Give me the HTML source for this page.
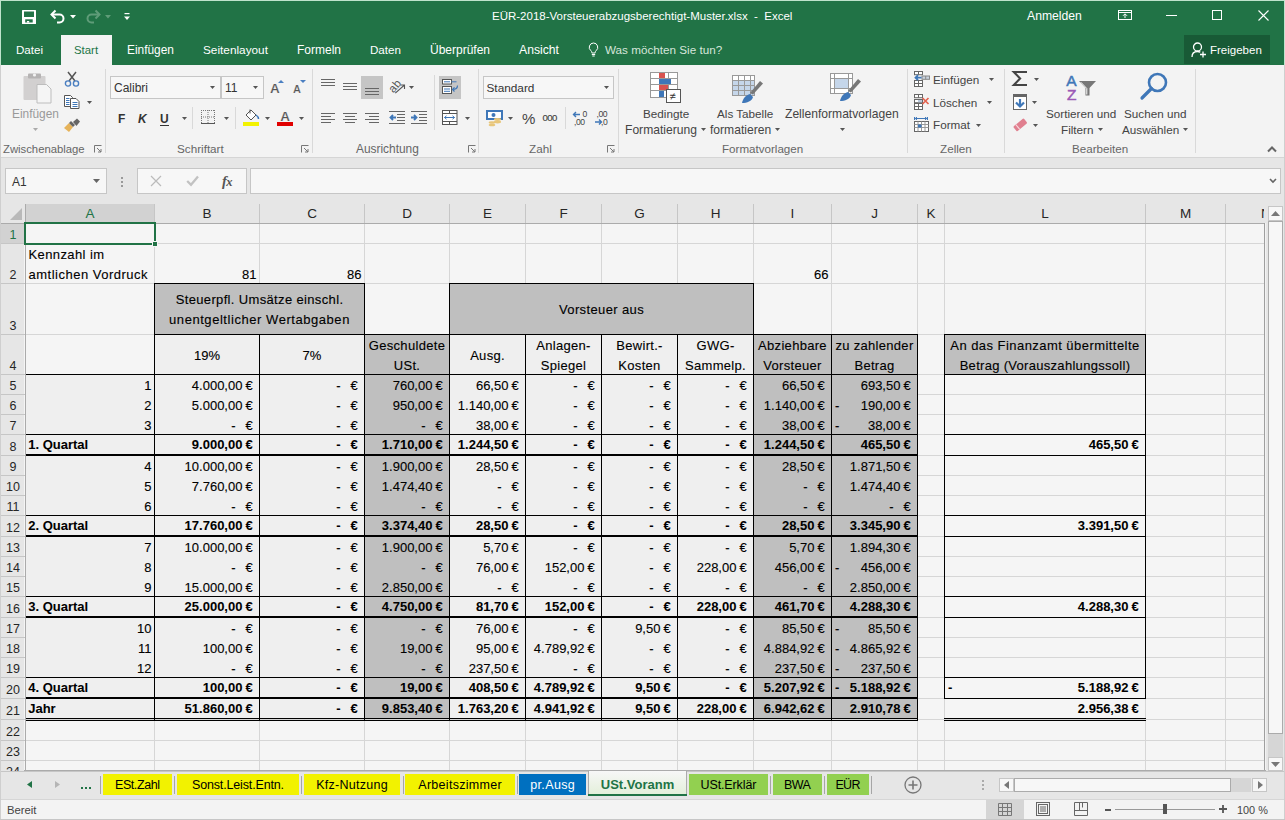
<!DOCTYPE html><html><head><meta charset="utf-8"><style>
html,body{margin:0;padding:0}
body{width:1285px;height:820px;overflow:hidden;position:relative;background:#f3f3f3;font-family:"Liberation Sans",sans-serif}
.a{position:absolute}
.t{white-space:pre}
.c{-webkit-text-stroke:0.12px currentColor}
.c[style*="font-weight:700"]{-webkit-text-stroke:0.05px currentColor}
svg{overflow:visible}
</style></head><body>

<div class="a" style="left:0px;top:0px;width:1285px;height:65px;background:#217346"></div>
<div class="a" style="left:0px;top:0px;width:1285px;height:1px;background:#bfe3cc"></div>
<div class="a" style="left:0px;top:0px;width:1px;height:65px;background:#bfe3cc"></div>
<div class="a" style="left:1284px;top:0px;width:1px;height:65px;background:#bfe3cc"></div>
<svg class="a" style="left:22px;top:10px;" width="14" height="14" viewBox="0 0 14 14"><rect x="0" y="0" width="14" height="14" rx="0.5" fill="#fff"/><rect x="2" y="1.5" width="10" height="5.5" fill="#217346"/><rect x="3.2" y="9.3" width="7.5" height="3.2" fill="#217346"/><rect x="4.9" y="11" width="2.3" height="1.6" fill="#fff"/></svg>
<svg class="a" style="left:50px;top:9px;" width="16" height="15" viewBox="0 0 16 15"><path d="M2 5.5h7.5a4 4 0 0 1 0 8H7" fill="none" stroke="#fff" stroke-width="2"/><path d="M5.5 1.5L1.5 5.5l4 4" fill="none" stroke="#fff" stroke-width="2"/></svg>
<svg class="a" style="left:70px;top:15px;" width="6" height="4" viewBox="0 0 6 4"><path d="M0 0h6L3 3.5z" fill="#fff"/></svg>
<svg class="a" style="left:85px;top:9px;" width="16" height="15" viewBox="0 0 16 15"><path d="M14 5.5H6.5a4 4 0 0 0 0 8H9" fill="none" stroke="#5f9c78" stroke-width="2"/><path d="M10.5 1.5l4 4-4 4" fill="none" stroke="#5f9c78" stroke-width="2"/></svg>
<svg class="a" style="left:105px;top:15px;" width="6" height="4" viewBox="0 0 6 4"><path d="M0 0h6L3 3.5z" fill="#5f9c78"/></svg>
<svg class="a" style="left:124px;top:13px;" width="6" height="8" viewBox="0 0 6 8"><rect x="0.5" y="0" width="5" height="1.2" fill="#fff"/><path d="M0 3.5h6L3 7z" fill="#fff"/></svg>
<div class="a t " style="left:492px;top:6.02px;font-size:11.5px;line-height:20px;color:#ffffff;width:301px;text-align:left;">EÜR-2018-Vorsteuerabzugsberechtigt-Muster.xlsx  -  Excel</div>
<div class="a t " style="left:1027px;top:5.77px;font-size:12.2px;line-height:20px;color:#ffffff;">Anmelden</div>
<svg class="a" style="left:1118px;top:10px;" width="14" height="10" viewBox="0 0 14 10"><rect x="0.5" y="0.5" width="13" height="9" fill="none" stroke="#fff" stroke-width="1"/><line x1="0.5" y1="2.5" x2="13.5" y2="2.5" stroke="#fff"/><path d="M7 8V4M5 5.8L7 3.8 9 5.8" fill="none" stroke="#fff" stroke-width="1"/></svg>
<div class="a" style="left:1166px;top:15px;width:11px;height:1px;background:#fff"></div>
<div class="a" style="left:1212px;top:10px;width:10px;height:10px;border:1px solid #fff;box-sizing:border-box"></div>
<svg class="a" style="left:1258px;top:10px;" width="11" height="11" viewBox="0 0 11 11"><path d="M0.5 0.5l10 10M10.5 0.5l-10 10" stroke="#fff" stroke-width="1.1"/></svg>
<div class="a t " style="left:16px;top:39.98px;font-size:11.6px;line-height:20px;color:#ffffff;">Datei</div>
<div class="a" style="left:61px;top:35px;width:51px;height:30px;background:#f3f3f3"></div>
<div class="a t " style="left:74px;top:40.05px;font-size:11.4px;line-height:20px;color:#217346;">Start</div>
<div class="a t " style="left:127px;top:39.88px;font-size:11.9px;line-height:20px;color:#ffffff;">Einfügen</div>
<div class="a t " style="left:203px;top:39.91px;font-size:11.8px;line-height:20px;color:#ffffff;">Seitenlayout</div>
<div class="a t " style="left:297px;top:39.84px;font-size:12px;line-height:20px;color:#ffffff;">Formeln</div>
<div class="a t " style="left:370px;top:39.98px;font-size:11.6px;line-height:20px;color:#ffffff;">Daten</div>
<div class="a t " style="left:430px;top:39.84px;font-size:12px;line-height:20px;color:#ffffff;">Überprüfen</div>
<div class="a t " style="left:519px;top:39.77px;font-size:12.2px;line-height:20px;color:#ffffff;">Ansicht</div>
<svg class="a" style="left:588px;top:41.5px;" width="11" height="15" viewBox="0 0 11 15"><path d="M5.5 1a4.3 4.3 0 0 0-2.6 7.7c.6.5.9 1.1.9 1.8V11h3.4v-.5c0-.7.3-1.3.9-1.8A4.3 4.3 0 0 0 5.5 1z" fill="none" stroke="#fff" stroke-width="1"/><path d="M3.8 12.5h3.4M4.3 14h2.4" stroke="#fff" stroke-width="1"/></svg>
<div class="a t " style="left:605px;top:40.45px;font-size:11.7px;line-height:20px;color:#d5e5da;">Was möchten Sie tun?</div>
<div class="a" style="left:1184px;top:35px;width:86px;height:29px;background:#185a36"></div>
<svg class="a" style="left:1191px;top:42px;" width="16" height="16" viewBox="0 0 16 16"><circle cx="6.5" cy="5" r="4" fill="none" stroke="#fff" stroke-width="1.3"/><path d="M1 15c0-3.3 2.2-5.5 5.5-5.5 1.2 0 2 .3 2.8.7" fill="none" stroke="#fff" stroke-width="1.3"/><path d="M12 9.5v6M9 12.5h6" stroke="#fff" stroke-width="1.3"/></svg>
<div class="a t " style="left:1210px;top:40.02px;font-size:11.5px;line-height:20px;color:#ffffff;">Freigeben</div>
<div class="a" style="left:0px;top:65px;width:1285px;height:92px;background:#f3f3f3"></div>
<div class="a" style="left:0px;top:157px;width:1285px;height:1px;background:#d5d5d5"></div>
<svg class="a" style="left:23px;top:73px;" width="29" height="31" viewBox="0 0 29 31"><rect x="0.5" y="3" width="22" height="24" rx="1" fill="#d2d0d0"/><rect x="5" y="0.5" width="13" height="5" rx="1" fill="#b5b3b3"/><circle cx="11.5" cy="2" r="1.6" fill="#f3f3f3"/><path d="M14 11.5h9.5l4.5 4.5v14H14z" fill="#f5f5f5" stroke="#bdbdbd" stroke-width="1"/></svg>
<div class="a t " style="left:12px;top:104.28px;font-size:11.9px;line-height:20px;color:#999999;">Einfügen</div>
<svg class="a" style="left:33px;top:128px;" width="5" height="3" viewBox="0 0 5 3"><path d="M0 0h5L2.5 3z" fill="#aaa"/></svg>
<svg class="a" style="left:64px;top:71px;" width="16" height="16" viewBox="0 0 16 16"><path d="M4 1l7 9M12 1L5 10" stroke="#555" stroke-width="1.5"/><circle cx="4" cy="12.5" r="2.6" fill="none" stroke="#4a7fc1" stroke-width="1.4"/><circle cx="12" cy="12.5" r="2.6" fill="none" stroke="#4a7fc1" stroke-width="1.4"/></svg>
<svg class="a" style="left:64px;top:95px;" width="16" height="14" viewBox="0 0 16 14"><path d="M0.5 0.5h6l2 2v9h-8z" fill="#fff" stroke="#555" stroke-width="1"/><path d="M6.5 3.5h5.5l3 3v7h-8.5z" fill="#fff" stroke="#555" stroke-width="1"/><path d="M2 3.5h3.5M2 5.5h3.5M2 7.5h3.5M2 9.5h3.5M8.5 7.5h5M8.5 9.5h5M8.5 11.5h5" stroke="#3f77b8" stroke-width="1"/></svg>
<svg class="a" style="left:87px;top:101px;" width="5" height="3" viewBox="0 0 5 3"><path d="M0 0h5L2.5 3z" fill="#555"/></svg>
<svg class="a" style="left:64px;top:118px;" width="17" height="14" viewBox="0 0 17 14"><path d="M9 4l4-3.5 3 3L12.5 8z" fill="#666"/><path d="M0 10l5-5 4 4-4 5z" fill="#e6b35a"/><path d="M5 5l2-2 4 4-2 2z" fill="#666"/></svg>
<div class="a t " style="left:3px;top:138.88px;font-size:11.3px;line-height:20px;color:#666666;">Zwischenablage</div>
<svg class="a" style="left:94px;top:145px;" width="8" height="8" viewBox="0 0 8 8"><path d="M0.5 7.5V0.5h7" fill="none" stroke="#777" stroke-width="1"/><path d="M3 3l4 4M7 4v3H4" fill="none" stroke="#777" stroke-width="1"/></svg>
<div class="a" style="left:105px;top:69px;width:1px;height:84px;background:#d9d9d9"></div>
<div class="a" style="left:110px;top:76px;width:111px;height:23px;background:#f7f7f7;border:1px solid #c6c6c6;box-sizing:border-box"></div>
<div class="a t " style="left:114px;top:77.84px;font-size:12px;line-height:20px;color:#333;">Calibri</div>
<svg class="a" style="left:210px;top:86px;" width="5" height="3" viewBox="0 0 5 3"><path d="M0 0h5L2.5 3z" fill="#555"/></svg>
<div class="a" style="left:221px;top:76px;width:43px;height:23px;background:#f7f7f7;border:1px solid #c6c6c6;box-sizing:border-box"></div>
<div class="a t " style="left:225px;top:77.84px;font-size:12px;line-height:20px;color:#333;">11</div>
<svg class="a" style="left:253px;top:86px;" width="5" height="3" viewBox="0 0 5 3"><path d="M0 0h5L2.5 3z" fill="#555"/></svg>
<div class="a t " style="left:270px;top:78.52px;font-size:13.5px;line-height:20px;color:#555;font-weight:700;-webkit-text-stroke:0.2px #f3f3f3;">A</div>
<svg class="a" style="left:278px;top:80px;" width="6" height="3" viewBox="0 0 6 3"><path d="M0 3h6L3 0z" fill="#4a7fc1"/></svg>
<div class="a t " style="left:293px;top:79.39px;font-size:11px;line-height:20px;color:#555;font-weight:700;-webkit-text-stroke:0.2px #f3f3f3;">A</div>
<svg class="a" style="left:300px;top:80px;" width="6" height="3" viewBox="0 0 6 3"><path d="M0 0h6L3 3z" fill="#4a7fc1"/></svg>
<div class="a t " style="left:118px;top:108.84px;font-size:12px;line-height:20px;color:#333;font-weight:700;">F</div>
<div class="a t " style="left:138px;top:108.84px;font-size:12px;line-height:20px;color:#333;font-weight:700;font-style:italic;">K</div>
<div class="a t " style="left:160px;top:108.84px;font-size:12px;line-height:20px;color:#333;font-weight:700;">U</div>
<div class="a" style="left:160px;top:125px;width:9px;height:1px;background:#333"></div>
<svg class="a" style="left:182px;top:117px;" width="5" height="3" viewBox="0 0 5 3"><path d="M0 0h5L2.5 3z" fill="#555"/></svg>
<div class="a" style="left:192px;top:107px;width:1px;height:22px;background:#d9d9d9"></div>
<svg class="a" style="left:201px;top:110px;" width="14" height="14" viewBox="0 0 14 14"><path d="M0.5 0v13M13.5 0v13M0 0.5h14M7 0v13M0 7h14" fill="none" stroke="#777" stroke-width="1" stroke-dasharray="1 1"/><path d="M0 13.5h14" stroke="#555" stroke-width="1"/></svg>
<svg class="a" style="left:224px;top:117px;" width="5" height="3" viewBox="0 0 5 3"><path d="M0 0h5L2.5 3z" fill="#555"/></svg>
<div class="a" style="left:235px;top:107px;width:1px;height:22px;background:#d9d9d9"></div>
<svg class="a" style="left:243px;top:109px;" width="17" height="13" viewBox="0 0 17 13"><path d="M3 6l5-5 5 5-5 5z" fill="#fff" stroke="#555" stroke-width="1"/><path d="M7 0.5v4" stroke="#555"/><path d="M13 6c1.5 1 2.5 2.5 2.5 4" fill="none" stroke="#3f77b8" stroke-width="1.5"/></svg>
<div class="a" style="left:243px;top:122px;width:16px;height:4px;background:#f2f200"></div>
<svg class="a" style="left:265px;top:117px;" width="5" height="3" viewBox="0 0 5 3"><path d="M0 0h5L2.5 3z" fill="#555"/></svg>
<div class="a t " style="left:277px;top:107.12px;font-size:13.5px;line-height:20px;color:#555;font-weight:700;width:16px;text-align:center;-webkit-text-stroke:0.2px #f3f3f3;">A</div>
<div class="a" style="left:277px;top:122px;width:16px;height:4px;background:#e00000"></div>
<svg class="a" style="left:299px;top:117px;" width="5" height="3" viewBox="0 0 5 3"><path d="M0 0h5L2.5 3z" fill="#555"/></svg>
<div class="a t " style="left:177px;top:138.75px;font-size:11.7px;line-height:20px;color:#666666;">Schriftart</div>
<svg class="a" style="left:301px;top:145px;" width="8" height="8" viewBox="0 0 8 8"><path d="M0.5 7.5V0.5h7" fill="none" stroke="#777" stroke-width="1"/><path d="M3 3l4 4M7 4v3H4" fill="none" stroke="#777" stroke-width="1"/></svg>
<div class="a" style="left:312px;top:69px;width:1px;height:84px;background:#d9d9d9"></div>
<svg class="a" style="left:321px;top:79px;" width="16" height="10" viewBox="0 0 16 10"><rect x="0" y="0" width="14" height="1" fill="#666"/><rect x="0" y="3" width="14" height="1" fill="#666"/><rect x="0" y="6" width="14" height="1" fill="#666"/></svg>
<svg class="a" style="left:343px;top:83px;" width="16" height="10" viewBox="0 0 16 10"><rect x="0" y="0" width="14" height="1" fill="#666"/><rect x="0" y="3" width="14" height="1" fill="#666"/><rect x="0" y="6" width="14" height="1" fill="#666"/></svg>
<div class="a" style="left:361px;top:76px;width:22px;height:23px;background:#c5c5c5"></div>
<svg class="a" style="left:365px;top:88px;" width="16" height="10" viewBox="0 0 16 10"><rect x="0" y="0" width="14" height="1" fill="#666"/><rect x="0" y="3" width="14" height="1" fill="#666"/><rect x="0" y="6" width="14" height="1" fill="#666"/></svg>
<svg class="a" style="left:388px;top:78px;" width="18" height="18" viewBox="0 0 18 18"><text x="0" y="12.5" font-size="11.5" font-family="Liberation Sans" fill="#555" transform="rotate(-50 6 8)">ab</text><path d="M7.3 15.2L16.5 7M12.5 7h4v4" fill="none" stroke="#555" stroke-width="1.1"/></svg>
<svg class="a" style="left:409px;top:86px;" width="5" height="3" viewBox="0 0 5 3"><path d="M0 0h5L2.5 3z" fill="#555"/></svg>
<svg class="a" style="left:321px;top:113px;" width="16" height="13" viewBox="0 0 16 13"><rect x="0" y="0" width="14" height="1" fill="#666"/><rect x="0" y="3" width="10" height="1" fill="#666"/><rect x="0" y="6" width="14" height="1" fill="#666"/><rect x="0" y="9" width="10" height="1" fill="#666"/></svg>
<svg class="a" style="left:343px;top:113px;" width="16" height="13" viewBox="0 0 16 13"><rect x="0" y="0" width="14" height="1" fill="#666"/><rect x="2" y="3" width="10" height="1" fill="#666"/><rect x="0" y="6" width="14" height="1" fill="#666"/><rect x="2" y="9" width="10" height="1" fill="#666"/></svg>
<svg class="a" style="left:365px;top:113px;" width="16" height="13" viewBox="0 0 16 13"><rect x="0" y="0" width="14" height="1" fill="#666"/><rect x="4" y="3" width="10" height="1" fill="#666"/><rect x="0" y="6" width="14" height="1" fill="#666"/><rect x="4" y="9" width="10" height="1" fill="#666"/></svg>
<svg class="a" style="left:389px;top:110px;" width="17" height="15" viewBox="0 0 17 15"><path d="M0 1.5h16M8 4.5h8M8 7.5h8M8 10.5h8M0 13.5h16" stroke="#666" stroke-width="1"/><path d="M7 7.5H1.5M4 5L1.5 7.5 4 10" fill="none" stroke="#3f77b8" stroke-width="1.8"/></svg>
<svg class="a" style="left:411px;top:110px;" width="17" height="15" viewBox="0 0 17 15"><path d="M0 1.5h16M8 4.5h8M8 7.5h8M8 10.5h8M0 13.5h16" stroke="#666" stroke-width="1"/><path d="M0 7.5h5.5M3 5l2.5 2.5L3 10" fill="none" stroke="#3f77b8" stroke-width="1.8"/></svg>
<div class="a" style="left:434px;top:75px;width:1px;height:55px;background:#d9d9d9"></div>
<div class="a" style="left:439px;top:76px;width:22px;height:23px;background:#c5c5c5"></div>
<svg class="a" style="left:441px;top:78px;" width="18" height="17" viewBox="0 0 18 17"><rect x="1.5" y="1.5" width="9" height="4.5" fill="#fff" stroke="#555" stroke-width="1"/><path d="M3 3.8h6M10.5 3.8h5" stroke="#3f77b8" stroke-width="1"/><rect x="1.5" y="8.5" width="9" height="7" fill="#fff" stroke="#555" stroke-width="1"/><path d="M3 11h6M3 13.3h6" stroke="#3f77b8" stroke-width="1"/><path d="M16.5 7.5c0 2.5-2 4-5 4M13.5 9.3l-2 2.2 2 2" fill="none" stroke="#3f77b8" stroke-width="1.2"/></svg>
<svg class="a" style="left:442px;top:110px;" width="16" height="15" viewBox="0 0 16 15"><rect x="0.5" y="0.5" width="14.5" height="14" fill="#fff" stroke="#555" stroke-width="1"/><path d="M0.5 3.5h14.5M0.5 11.5h14.5M7.5 0.5v3M7.5 11.5v3" stroke="#555" stroke-width="1"/><path d="M2.5 7.5h10M4.5 5.8L2.5 7.5l2 1.7M10.5 5.8l2 1.7-2 1.7" fill="none" stroke="#3f77b8" stroke-width="1"/></svg>
<svg class="a" style="left:464.5px;top:117px;" width="5" height="3" viewBox="0 0 5 3"><path d="M0 0h5L2.5 3z" fill="#555"/></svg>
<div class="a t " style="left:356px;top:138.68px;font-size:11.9px;line-height:20px;color:#666666;">Ausrichtung</div>
<svg class="a" style="left:468px;top:145px;" width="8" height="8" viewBox="0 0 8 8"><path d="M0.5 7.5V0.5h7" fill="none" stroke="#777" stroke-width="1"/><path d="M3 3l4 4M7 4v3H4" fill="none" stroke="#777" stroke-width="1"/></svg>
<div class="a" style="left:478px;top:69px;width:1px;height:84px;background:#d9d9d9"></div>
<div class="a" style="left:483px;top:76px;width:131px;height:23px;background:#f7f7f7;border:1px solid #c6c6c6;box-sizing:border-box"></div>
<div class="a t " style="left:486.5px;top:77.91px;font-size:11.8px;line-height:20px;color:#333;">Standard</div>
<svg class="a" style="left:604px;top:86px;" width="5" height="3" viewBox="0 0 5 3"><path d="M0 0h5L2.5 3z" fill="#555"/></svg>
<svg class="a" style="left:486px;top:110px;" width="17" height="17" viewBox="0 0 17 17"><rect x="1" y="1" width="15" height="8" fill="#fff" stroke="#3f77b8" stroke-width="2"/><circle cx="7.5" cy="5" r="2" fill="#3f77b8"/><ellipse cx="11.5" cy="9.5" rx="3.6" ry="1.4" fill="#e8c67a"/><ellipse cx="11.5" cy="12" rx="3.6" ry="1.4" fill="#e8c67a"/><ellipse cx="6" cy="12.5" rx="3.3" ry="1.3" fill="#e8c67a"/><ellipse cx="6" cy="15" rx="3.3" ry="1.3" fill="#e8c67a"/></svg>
<svg class="a" style="left:507.5px;top:117px;" width="5" height="3" viewBox="0 0 5 3"><path d="M0 0h5L2.5 3z" fill="#555"/></svg>
<div class="a t " style="left:522px;top:108.80px;font-size:15px;line-height:20px;color:#444;">%</div>
<div class="a t " style="left:542.5px;top:107.67px;font-size:9.6px;line-height:20px;color:#444;letter-spacing:-0.55px;-webkit-text-stroke:0.15px #444;">000</div>
<div class="a" style="left:565px;top:107px;width:1px;height:22px;background:#d9d9d9"></div>
<svg class="a" style="left:572px;top:110px;" width="17" height="16" viewBox="0 0 17 16"><path d="M8 4.5H1.5M4 2L1.5 4.5 4 7" fill="none" stroke="#3f77b8" stroke-width="1.4"/><text x="10.5" y="6.5" font-size="8.6" font-family="Liberation Sans" fill="#444">0</text><text x="2" y="14.5" font-size="8.6" font-family="Liberation Sans" fill="#444" letter-spacing="-0.4">,00</text></svg>
<svg class="a" style="left:594px;top:110px;" width="17" height="16" viewBox="0 0 17 16"><text x="2.5" y="6.5" font-size="8.6" font-family="Liberation Sans" fill="#444" letter-spacing="-0.4">,00</text><path d="M1 12h6.5M5 9.5l2.5 2.5L5 14.5" fill="none" stroke="#3f77b8" stroke-width="1.4"/><text x="7" y="14.5" font-size="8.6" font-family="Liberation Sans" fill="#444" letter-spacing="-0.4">,0</text></svg>
<div class="a t " style="left:529px;top:138.75px;font-size:11.7px;line-height:20px;color:#666666;">Zahl</div>
<svg class="a" style="left:607px;top:145px;" width="8" height="8" viewBox="0 0 8 8"><path d="M0.5 7.5V0.5h7" fill="none" stroke="#777" stroke-width="1"/><path d="M3 3l4 4M7 4v3H4" fill="none" stroke="#777" stroke-width="1"/></svg>
<div class="a" style="left:618px;top:69px;width:1px;height:84px;background:#d9d9d9"></div>
<svg class="a" style="left:650px;top:72px;" width="32" height="32" viewBox="0 0 32 32"><g stroke="#999" stroke-width="1" fill="#fff"><rect x="0.5" y="0.5" width="27" height="25"/></g><path d="M0.5 6.5h27M0.5 12.5h27M0.5 18.5h27M9.5 0.5v25M18.5 0.5v25" stroke="#999"/><rect x="9" y="1" width="6" height="5" fill="#d9534f"/><rect x="9" y="7" width="12" height="5" fill="#3f77b8"/><rect x="9" y="13" width="9" height="5" fill="#d9534f"/><rect x="9" y="19" width="5" height="6" fill="#3f77b8"/><rect x="16.5" y="17.5" width="14" height="13" fill="#fff" stroke="#555"/><text x="19.5" y="28" font-size="11" font-family="Liberation Sans" fill="#333">≠</text></svg>
<div class="a t " style="left:643px;top:103.95px;font-size:11.7px;line-height:20px;color:#444444;">Bedingte</div>
<div class="a t " style="left:625px;top:119.81px;font-size:12.1px;line-height:20px;color:#444444;">Formatierung</div>
<svg class="a" style="left:701px;top:128px;" width="5" height="3" viewBox="0 0 5 3"><path d="M0 0h5L2.5 3z" fill="#555"/></svg>
<svg class="a" style="left:732px;top:75px;" width="31" height="29" viewBox="0 0 31 29"><rect x="0.5" y="0.5" width="22" height="20" fill="#fff" stroke="#999"/><rect x="1" y="5" width="21" height="15" fill="#c5d6ea"/><path d="M0.5 5.5h22M0.5 10.5h22M0.5 15.5h22M6.5 0.5v20M12.5 0.5v20M18.5 0.5v20" stroke="#999"/><path d="M18 18l10-12 3 2.5-10 11z" fill="#777"/><path d="M10 28c1-5 4-8 8-9l3 3c-1 4-6 6-11 6z" fill="#3f77b8"/></svg>
<div class="a t " style="left:717px;top:103.95px;font-size:11.7px;line-height:20px;color:#444444;">Als Tabelle</div>
<div class="a t " style="left:710px;top:119.81px;font-size:12.1px;line-height:20px;color:#444444;">formatieren</div>
<svg class="a" style="left:775px;top:128px;" width="5" height="3" viewBox="0 0 5 3"><path d="M0 0h5L2.5 3z" fill="#555"/></svg>
<svg class="a" style="left:830px;top:73px;" width="30" height="30" viewBox="0 0 30 30"><rect x="0.5" y="0.5" width="22" height="20" fill="#fff" stroke="#999"/><path d="M0.5 5.5h22M0.5 15.5h22M4.5 0.5v20M18.5 0.5v20" stroke="#999"/><rect x="5" y="6" width="13" height="9" fill="#c5d6ea"/><path d="M18 18l10-12 3 2.5-10 11z" fill="#777"/><path d="M10 28c1-5 4-8 8-9l3 3c-1 4-6 6-11 6z" fill="#3f77b8"/></svg>
<div class="a t " style="left:785px;top:103.81px;font-size:12.1px;line-height:20px;color:#444444;">Zellenformatvorlagen</div>
<svg class="a" style="left:840px;top:128px;" width="5" height="3" viewBox="0 0 5 3"><path d="M0 0h5L2.5 3z" fill="#555"/></svg>
<div class="a t " style="left:722px;top:138.78px;font-size:11.6px;line-height:20px;color:#666666;">Formatvorlagen</div>
<div class="a" style="left:907px;top:69px;width:1px;height:84px;background:#d9d9d9"></div>
<svg class="a" style="left:914px;top:71px;" width="17" height="17" viewBox="0 0 17 17"><g fill="#fff" stroke="#666" stroke-width="1"><rect x="0.5" y="0.5" width="8" height="3.2"/><rect x="0.5" y="9.5" width="8" height="6"/></g><path d="M4.5 0.5v3.2M4.5 9.5v6M0.5 12.5h8" stroke="#666"/><rect x="8" y="5" width="7.5" height="3.3" fill="#c9d3de" stroke="#888"/><path d="M11.7 5v3.3" stroke="#888"/><path d="M7.5 6.7H1.5M4 4.2L1.5 6.7 4 9.2" fill="none" stroke="#3f77b8" stroke-width="1.8"/></svg>
<div class="a t " style="left:933px;top:70.25px;font-size:11.7px;line-height:20px;color:#444444;">Einfügen</div>
<svg class="a" style="left:989px;top:78px;" width="5" height="3" viewBox="0 0 5 3"><path d="M0 0h5L2.5 3z" fill="#555"/></svg>
<svg class="a" style="left:914px;top:94px;" width="17" height="17" viewBox="0 0 17 17"><g fill="#fff" stroke="#666" stroke-width="1"><rect x="0.5" y="0.5" width="8" height="3.2"/><rect x="0.5" y="5.5" width="8" height="3.2"/><rect x="0.5" y="9.5" width="8" height="6"/></g><rect x="4" y="6" width="4" height="2.2" fill="#b9c9dc"/><path d="M4.5 0.5v3.2M4.5 9.5v6M0.5 12.5h8" stroke="#666"/><path d="M8.5 4l6 6M14.5 4l-6 6" stroke="#e2624e" stroke-width="1.7"/></svg>
<div class="a t " style="left:933px;top:92.55px;font-size:11.7px;line-height:20px;color:#444444;">Löschen</div>
<svg class="a" style="left:987px;top:101px;" width="5" height="3" viewBox="0 0 5 3"><path d="M0 0h5L2.5 3z" fill="#555"/></svg>
<svg class="a" style="left:914px;top:117px;" width="16" height="16" viewBox="0 0 16 16"><path d="M1.5 1.5h11M0.5 0v3M13.5 0v3M3 0.2L1.2 1.5 3 2.8M11 0.2l1.8 1.3L11 2.8" fill="none" stroke="#3f77b8" stroke-width="1"/><rect x="0.5" y="4.5" width="14" height="10" fill="#fff" stroke="#666"/><path d="M0.5 7.5h14M0.5 10.5h14M4 4.5v10M7.5 4.5v10M11 4.5v10" stroke="#999"/><rect x="4" y="7.5" width="3.5" height="3" fill="#3f77b8"/></svg>
<div class="a t " style="left:933px;top:115.35px;font-size:11.7px;line-height:20px;color:#444444;">Format</div>
<svg class="a" style="left:976px;top:124px;" width="5" height="3" viewBox="0 0 5 3"><path d="M0 0h5L2.5 3z" fill="#555"/></svg>
<div class="a t " style="left:940px;top:138.75px;font-size:11.7px;line-height:20px;color:#666666;">Zellen</div>
<div class="a" style="left:1004px;top:69px;width:1px;height:84px;background:#d9d9d9"></div>
<svg class="a" style="left:1012px;top:71px;" width="16" height="16" viewBox="0 0 16 16"><path d="M15 1H1.8l6.3 6.5L1.8 14H15" fill="none" stroke="#444" stroke-width="2.1" stroke-linejoin="miter"/></svg>
<svg class="a" style="left:1034px;top:78px;" width="5" height="3" viewBox="0 0 5 3"><path d="M0 0h5L2.5 3z" fill="#555"/></svg>
<svg class="a" style="left:1013px;top:94px;" width="15" height="16" viewBox="0 0 15 16"><rect x="0.5" y="0.5" width="13" height="15" fill="#fff" stroke="#666"/><rect x="0" y="0" width="14" height="3" fill="#666"/><path d="M7 5v7" stroke="#3f77b8" stroke-width="2.2"/><path d="M3 8.5l4 4 4-4" fill="none" stroke="#3f77b8" stroke-width="2.2"/></svg>
<svg class="a" style="left:1032px;top:101px;" width="5" height="3" viewBox="0 0 5 3"><path d="M0 0h5L2.5 3z" fill="#555"/></svg>
<svg class="a" style="left:1013px;top:118px;" width="14" height="14" viewBox="0 0 14 14"><g transform="rotate(-40 7 7)"><rect x="0.5" y="4" width="13.5" height="6.2" rx="1.2" fill="#e07f8f"/><rect x="3.5" y="4" width="1.1" height="6.2" fill="#f8d9de"/></g></svg>
<svg class="a" style="left:1033px;top:124px;" width="5" height="3" viewBox="0 0 5 3"><path d="M0 0h5L2.5 3z" fill="#555"/></svg>
<svg class="a" style="left:1066px;top:73px;" width="31" height="28" viewBox="0 0 31 28"><text x="0.3" y="12.6" font-size="15.5" font-family="Liberation Sans" fill="#3f77b8" stroke="#3f77b8" stroke-width="0.5">A</text><text x="1" y="26.8" font-size="15.5" font-family="Liberation Sans" fill="#9b59b6" stroke="#9b59b6" stroke-width="0.5">Z</text><path d="M13 8h17l-6.5 7v7.5h-4V15z" fill="#777"/><path d="M14.8 9.2l6 6.3v6" fill="none" stroke="#fff" stroke-width="1"/></svg>
<div class="a t " style="left:1046px;top:103.95px;font-size:11.7px;line-height:20px;color:#444444;">Sortieren und</div>
<div class="a t " style="left:1061px;top:119.95px;font-size:11.7px;line-height:20px;color:#444444;">Filtern</div>
<svg class="a" style="left:1098px;top:128px;" width="5" height="3" viewBox="0 0 5 3"><path d="M0 0h5L2.5 3z" fill="#555"/></svg>
<svg class="a" style="left:1140px;top:72px;" width="30" height="30" viewBox="0 0 30 30"><circle cx="17.5" cy="10.5" r="8.5" fill="none" stroke="#3f77b8" stroke-width="2.6"/><path d="M11.5 16.5L2 26" stroke="#3f77b8" stroke-width="3.2" stroke-linecap="round"/></svg>
<div class="a t " style="left:1124px;top:103.95px;font-size:11.7px;line-height:20px;color:#444444;">Suchen und</div>
<div class="a t " style="left:1122px;top:119.95px;font-size:11.7px;line-height:20px;color:#444444;">Auswählen</div>
<svg class="a" style="left:1183px;top:128px;" width="5" height="3" viewBox="0 0 5 3"><path d="M0 0h5L2.5 3z" fill="#555"/></svg>
<div class="a t " style="left:1072px;top:138.78px;font-size:11.6px;line-height:20px;color:#666666;">Bearbeiten</div>
<div class="a" style="left:1195px;top:69px;width:1px;height:84px;background:#d9d9d9"></div>
<svg class="a" style="left:1267px;top:146px;" width="10" height="6" viewBox="0 0 10 6"><path d="M1 5.5L5 1.5l4 4" fill="none" stroke="#666" stroke-width="2"/></svg>
<div class="a" style="left:1px;top:158px;width:1283px;height:46px;background:#e6e6e6"></div>
<div class="a" style="left:5px;top:168px;width:102px;height:26px;background:#f7f7f7;border:1px solid #c6c6c6;box-sizing:border-box"></div>
<div class="a t " style="left:12px;top:171.84px;font-size:12px;line-height:20px;color:#333;">A1</div>
<svg class="a" style="left:93px;top:179px;" width="7" height="4" viewBox="0 0 7 4"><path d="M0 0h7L3.5 4z" fill="#666"/></svg>
<div class="a" style="left:121px;top:177px;width:2px;height:2px;background:#999"></div>
<div class="a" style="left:121px;top:181px;width:2px;height:2px;background:#999"></div>
<div class="a" style="left:121px;top:185px;width:2px;height:2px;background:#999"></div>
<div class="a" style="left:137px;top:168px;width:110px;height:26px;background:#f7f7f7;border:1px solid #c6c6c6;box-sizing:border-box"></div>
<svg class="a" style="left:150px;top:175px;" width="12" height="12" viewBox="0 0 12 12"><path d="M1 1l10 10M11 1L1 11" stroke="#bbb" stroke-width="1.2"/></svg>
<svg class="a" style="left:186px;top:175px;" width="13" height="11" viewBox="0 0 13 11"><path d="M1.2 6l3.8 3.8L12 1.5" fill="none" stroke="#c2c2c2" stroke-width="2.3"/></svg>
<div class="a t " style="left:222px;top:170.98px;font-size:14.5px;line-height:20px;color:#555;font-family:'Liberation Serif';letter-spacing:-0.5px;"><b><i>f</i></b><span style="font-size:12.5px;position:relative;top:0px"><b><i>x</i></b></span></div>
<div class="a" style="left:250px;top:168px;width:1031px;height:26px;background:#f7f7f7;border:1px solid #c6c6c6;box-sizing:border-box"></div>
<svg class="a" style="left:1269px;top:178px;" width="8" height="6" viewBox="0 0 8 6"><path d="M1 1l3 3 3-3" fill="none" stroke="#666" stroke-width="1.6"/></svg>
<div class="a" style="left:1px;top:204px;width:1263px;height:567px;background:#f5f5f5"></div>
<div class="a" style="left:26px;top:243px;width:1238px;height:1px;background:#d6d6d6"></div>
<div class="a" style="left:26px;top:283px;width:1238px;height:1px;background:#d6d6d6"></div>
<div class="a" style="left:26px;top:334px;width:1238px;height:1px;background:#d6d6d6"></div>
<div class="a" style="left:26px;top:374px;width:1238px;height:1px;background:#d6d6d6"></div>
<div class="a" style="left:26px;top:394px;width:1238px;height:1px;background:#d6d6d6"></div>
<div class="a" style="left:26px;top:414px;width:1238px;height:1px;background:#d6d6d6"></div>
<div class="a" style="left:26px;top:434px;width:1238px;height:1px;background:#d6d6d6"></div>
<div class="a" style="left:26px;top:455px;width:1238px;height:1px;background:#d6d6d6"></div>
<div class="a" style="left:26px;top:475px;width:1238px;height:1px;background:#d6d6d6"></div>
<div class="a" style="left:26px;top:495px;width:1238px;height:1px;background:#d6d6d6"></div>
<div class="a" style="left:26px;top:515px;width:1238px;height:1px;background:#d6d6d6"></div>
<div class="a" style="left:26px;top:536px;width:1238px;height:1px;background:#d6d6d6"></div>
<div class="a" style="left:26px;top:556px;width:1238px;height:1px;background:#d6d6d6"></div>
<div class="a" style="left:26px;top:576px;width:1238px;height:1px;background:#d6d6d6"></div>
<div class="a" style="left:26px;top:596px;width:1238px;height:1px;background:#d6d6d6"></div>
<div class="a" style="left:26px;top:617px;width:1238px;height:1px;background:#d6d6d6"></div>
<div class="a" style="left:26px;top:637px;width:1238px;height:1px;background:#d6d6d6"></div>
<div class="a" style="left:26px;top:657px;width:1238px;height:1px;background:#d6d6d6"></div>
<div class="a" style="left:26px;top:677px;width:1238px;height:1px;background:#d6d6d6"></div>
<div class="a" style="left:26px;top:698px;width:1238px;height:1px;background:#d6d6d6"></div>
<div class="a" style="left:26px;top:719px;width:1238px;height:1px;background:#d6d6d6"></div>
<div class="a" style="left:26px;top:740px;width:1238px;height:1px;background:#d6d6d6"></div>
<div class="a" style="left:26px;top:760px;width:1238px;height:1px;background:#d6d6d6"></div>
<div class="a" style="left:154px;top:224px;width:1px;height:547px;background:#d6d6d6"></div>
<div class="a" style="left:259px;top:224px;width:1px;height:547px;background:#d6d6d6"></div>
<div class="a" style="left:364px;top:224px;width:1px;height:547px;background:#d6d6d6"></div>
<div class="a" style="left:449px;top:224px;width:1px;height:547px;background:#d6d6d6"></div>
<div class="a" style="left:525px;top:224px;width:1px;height:547px;background:#d6d6d6"></div>
<div class="a" style="left:601px;top:224px;width:1px;height:547px;background:#d6d6d6"></div>
<div class="a" style="left:677px;top:224px;width:1px;height:547px;background:#d6d6d6"></div>
<div class="a" style="left:753px;top:224px;width:1px;height:547px;background:#d6d6d6"></div>
<div class="a" style="left:831px;top:224px;width:1px;height:547px;background:#d6d6d6"></div>
<div class="a" style="left:917px;top:224px;width:1px;height:547px;background:#d6d6d6"></div>
<div class="a" style="left:944px;top:224px;width:1px;height:547px;background:#d6d6d6"></div>
<div class="a" style="left:1145px;top:224px;width:1px;height:547px;background:#d6d6d6"></div>
<div class="a" style="left:1225px;top:224px;width:1px;height:547px;background:#d6d6d6"></div>
<div class="a" style="left:1264px;top:223px;width:1px;height:548px;background:#9f9f9f"></div>
<div class="a" style="left:1px;top:770px;width:1265px;height:1px;background:#ababab"></div>
<div class="a" style="left:1px;top:204px;width:1265px;height:19px;background:#e6e6e6"></div>
<div class="a" style="left:1px;top:204px;width:23px;height:567px;background:#e6e6e6"></div>
<div class="a" style="left:25px;top:204px;width:129px;height:19px;background:#d2d2d2"></div>
<div class="a" style="left:1px;top:224px;width:24px;height:19px;background:#d2d2d2"></div>
<div class="a" style="left:1px;top:223px;width:1263px;height:1px;background:#ababab"></div>
<div class="a" style="left:25px;top:204px;width:1px;height:567px;background:#ababab"></div>
<div class="a" style="left:154px;top:204px;width:1px;height:19px;background:#c6c6c6"></div>
<div class="a" style="left:259px;top:204px;width:1px;height:19px;background:#c6c6c6"></div>
<div class="a" style="left:364px;top:204px;width:1px;height:19px;background:#c6c6c6"></div>
<div class="a" style="left:449px;top:204px;width:1px;height:19px;background:#c6c6c6"></div>
<div class="a" style="left:525px;top:204px;width:1px;height:19px;background:#c6c6c6"></div>
<div class="a" style="left:601px;top:204px;width:1px;height:19px;background:#c6c6c6"></div>
<div class="a" style="left:677px;top:204px;width:1px;height:19px;background:#c6c6c6"></div>
<div class="a" style="left:753px;top:204px;width:1px;height:19px;background:#c6c6c6"></div>
<div class="a" style="left:831px;top:204px;width:1px;height:19px;background:#c6c6c6"></div>
<div class="a" style="left:917px;top:204px;width:1px;height:19px;background:#c6c6c6"></div>
<div class="a" style="left:944px;top:204px;width:1px;height:19px;background:#c6c6c6"></div>
<div class="a" style="left:1145px;top:204px;width:1px;height:19px;background:#c6c6c6"></div>
<div class="a" style="left:1225px;top:204px;width:1px;height:19px;background:#c6c6c6"></div>
<div class="a" style="left:1px;top:243px;width:24px;height:1px;background:#c6c6c6"></div>
<div class="a" style="left:1px;top:283px;width:24px;height:1px;background:#c6c6c6"></div>
<div class="a" style="left:1px;top:334px;width:24px;height:1px;background:#c6c6c6"></div>
<div class="a" style="left:1px;top:374px;width:24px;height:1px;background:#c6c6c6"></div>
<div class="a" style="left:1px;top:394px;width:24px;height:1px;background:#c6c6c6"></div>
<div class="a" style="left:1px;top:414px;width:24px;height:1px;background:#c6c6c6"></div>
<div class="a" style="left:1px;top:434px;width:24px;height:1px;background:#c6c6c6"></div>
<div class="a" style="left:1px;top:455px;width:24px;height:1px;background:#c6c6c6"></div>
<div class="a" style="left:1px;top:475px;width:24px;height:1px;background:#c6c6c6"></div>
<div class="a" style="left:1px;top:495px;width:24px;height:1px;background:#c6c6c6"></div>
<div class="a" style="left:1px;top:515px;width:24px;height:1px;background:#c6c6c6"></div>
<div class="a" style="left:1px;top:536px;width:24px;height:1px;background:#c6c6c6"></div>
<div class="a" style="left:1px;top:556px;width:24px;height:1px;background:#c6c6c6"></div>
<div class="a" style="left:1px;top:576px;width:24px;height:1px;background:#c6c6c6"></div>
<div class="a" style="left:1px;top:596px;width:24px;height:1px;background:#c6c6c6"></div>
<div class="a" style="left:1px;top:617px;width:24px;height:1px;background:#c6c6c6"></div>
<div class="a" style="left:1px;top:637px;width:24px;height:1px;background:#c6c6c6"></div>
<div class="a" style="left:1px;top:657px;width:24px;height:1px;background:#c6c6c6"></div>
<div class="a" style="left:1px;top:677px;width:24px;height:1px;background:#c6c6c6"></div>
<div class="a" style="left:1px;top:698px;width:24px;height:1px;background:#c6c6c6"></div>
<div class="a" style="left:1px;top:719px;width:24px;height:1px;background:#c6c6c6"></div>
<div class="a" style="left:1px;top:740px;width:24px;height:1px;background:#c6c6c6"></div>
<div class="a" style="left:1px;top:760px;width:24px;height:1px;background:#c6c6c6"></div>
<svg class="a" style="left:10px;top:208px;" width="12" height="12" viewBox="0 0 12 12"><path d="M12 0V12H0z" fill="#b9b9b9"/></svg>
<div class="a t " style="left:26px;top:203.82px;font-size:13.5px;line-height:20px;color:#217346;width:128px;text-align:center;">A</div>
<div class="a t " style="left:155px;top:203.82px;font-size:13.5px;line-height:20px;color:#262626;width:104px;text-align:center;">B</div>
<div class="a t " style="left:260px;top:203.82px;font-size:13.5px;line-height:20px;color:#262626;width:104px;text-align:center;">C</div>
<div class="a t " style="left:365px;top:203.82px;font-size:13.5px;line-height:20px;color:#262626;width:84px;text-align:center;">D</div>
<div class="a t " style="left:450px;top:203.82px;font-size:13.5px;line-height:20px;color:#262626;width:75px;text-align:center;">E</div>
<div class="a t " style="left:526px;top:203.82px;font-size:13.5px;line-height:20px;color:#262626;width:75px;text-align:center;">F</div>
<div class="a t " style="left:602px;top:203.82px;font-size:13.5px;line-height:20px;color:#262626;width:75px;text-align:center;">G</div>
<div class="a t " style="left:678px;top:203.82px;font-size:13.5px;line-height:20px;color:#262626;width:75px;text-align:center;">H</div>
<div class="a t " style="left:754px;top:203.82px;font-size:13.5px;line-height:20px;color:#262626;width:77px;text-align:center;">I</div>
<div class="a t " style="left:832px;top:203.82px;font-size:13.5px;line-height:20px;color:#262626;width:85px;text-align:center;">J</div>
<div class="a t " style="left:918px;top:203.82px;font-size:13.5px;line-height:20px;color:#262626;width:26px;text-align:center;">K</div>
<div class="a t " style="left:945px;top:203.82px;font-size:13.5px;line-height:20px;color:#262626;width:200px;text-align:center;">L</div>
<div class="a t " style="left:1146px;top:203.82px;font-size:13.5px;line-height:20px;color:#262626;width:79px;text-align:center;">M</div>
<div class="a t " style="left:1261px;top:203.82px;font-size:13.5px;line-height:20px;color:#262626;width:3px;overflow:hidden;">N</div>
<div class="a t " style="left:1px;top:224.97px;font-size:12.5px;line-height:20px;color:#217346;width:24px;text-align:center;">1</div>
<div class="a t " style="left:1px;top:264.97px;font-size:12.5px;line-height:20px;color:#262626;width:24px;text-align:center;">2</div>
<div class="a t " style="left:1px;top:315.97px;font-size:12.5px;line-height:20px;color:#262626;width:24px;text-align:center;">3</div>
<div class="a t " style="left:1px;top:355.97px;font-size:12.5px;line-height:20px;color:#262626;width:24px;text-align:center;">4</div>
<div class="a t " style="left:1px;top:375.97px;font-size:12.5px;line-height:20px;color:#262626;width:24px;text-align:center;">5</div>
<div class="a t " style="left:1px;top:395.97px;font-size:12.5px;line-height:20px;color:#262626;width:24px;text-align:center;">6</div>
<div class="a t " style="left:1px;top:415.97px;font-size:12.5px;line-height:20px;color:#262626;width:24px;text-align:center;">7</div>
<div class="a t " style="left:1px;top:436.97px;font-size:12.5px;line-height:20px;color:#262626;width:24px;text-align:center;">8</div>
<div class="a t " style="left:1px;top:456.97px;font-size:12.5px;line-height:20px;color:#262626;width:24px;text-align:center;">9</div>
<div class="a t " style="left:1px;top:476.97px;font-size:12.5px;line-height:20px;color:#262626;width:24px;text-align:center;">10</div>
<div class="a t " style="left:1px;top:496.97px;font-size:12.5px;line-height:20px;color:#262626;width:24px;text-align:center;">11</div>
<div class="a t " style="left:1px;top:517.97px;font-size:12.5px;line-height:20px;color:#262626;width:24px;text-align:center;">12</div>
<div class="a t " style="left:1px;top:537.97px;font-size:12.5px;line-height:20px;color:#262626;width:24px;text-align:center;">13</div>
<div class="a t " style="left:1px;top:557.97px;font-size:12.5px;line-height:20px;color:#262626;width:24px;text-align:center;">14</div>
<div class="a t " style="left:1px;top:577.97px;font-size:12.5px;line-height:20px;color:#262626;width:24px;text-align:center;">15</div>
<div class="a t " style="left:1px;top:598.97px;font-size:12.5px;line-height:20px;color:#262626;width:24px;text-align:center;">16</div>
<div class="a t " style="left:1px;top:618.97px;font-size:12.5px;line-height:20px;color:#262626;width:24px;text-align:center;">17</div>
<div class="a t " style="left:1px;top:638.97px;font-size:12.5px;line-height:20px;color:#262626;width:24px;text-align:center;">18</div>
<div class="a t " style="left:1px;top:658.97px;font-size:12.5px;line-height:20px;color:#262626;width:24px;text-align:center;">19</div>
<div class="a t " style="left:1px;top:679.97px;font-size:12.5px;line-height:20px;color:#262626;width:24px;text-align:center;">20</div>
<div class="a t " style="left:1px;top:700.97px;font-size:12.5px;line-height:20px;color:#262626;width:24px;text-align:center;">21</div>
<div class="a t " style="left:1px;top:721.97px;font-size:12.5px;line-height:20px;color:#262626;width:24px;text-align:center;">22</div>
<div class="a t " style="left:1px;top:741.97px;font-size:12.5px;line-height:20px;color:#262626;width:24px;text-align:center;">23</div>
<div class="a" style="left:1px;top:761px;width:24px;height:10px;overflow:hidden">
<div class="a t " style="left:0px;top:0.67px;font-size:12.5px;line-height:20px;color:#262626;width:24px;text-align:center;">24</div>
</div>
<div class="a" style="left:26px;top:375px;width:891px;height:344px;background:#efefef"></div>
<div class="a" style="left:155px;top:335px;width:209px;height:39px;background:#efefef"></div>
<div class="a" style="left:450px;top:335px;width:303px;height:39px;background:#efefef"></div>
<div class="a" style="left:155px;top:284px;width:209px;height:50px;background:#bfbfbf"></div>
<div class="a" style="left:450px;top:284px;width:303px;height:50px;background:#bfbfbf"></div>
<div class="a" style="left:365px;top:335px;width:84px;height:384px;background:#bfbfbf"></div>
<div class="a" style="left:754px;top:335px;width:163px;height:384px;background:#bfbfbf"></div>
<div class="a" style="left:945px;top:335px;width:200px;height:39px;background:#bfbfbf"></div>
<div class="a" style="left:154px;top:283px;width:211px;height:1px;background:#000"></div>
<div class="a" style="left:449px;top:283px;width:305px;height:1px;background:#000"></div>
<div class="a" style="left:154px;top:283px;width:1px;height:52px;background:#000"></div>
<div class="a" style="left:364px;top:283px;width:1px;height:52px;background:#000"></div>
<div class="a" style="left:449px;top:283px;width:1px;height:52px;background:#000"></div>
<div class="a" style="left:753px;top:283px;width:1px;height:52px;background:#000"></div>
<div class="a" style="left:154px;top:334px;width:764px;height:1px;background:#000"></div>
<div class="a" style="left:917px;top:334px;width:1px;height:1px;background:#000"></div>
<div class="a" style="left:26px;top:374px;width:892px;height:1px;background:#000"></div>
<div class="a" style="left:26px;top:434px;width:892px;height:1px;background:#000"></div>
<div class="a" style="left:26px;top:515px;width:892px;height:1px;background:#000"></div>
<div class="a" style="left:26px;top:596px;width:892px;height:1px;background:#000"></div>
<div class="a" style="left:26px;top:677px;width:892px;height:1px;background:#000"></div>
<div class="a" style="left:26px;top:454px;width:892px;height:2px;background:#000"></div>
<div class="a" style="left:26px;top:535px;width:892px;height:2px;background:#000"></div>
<div class="a" style="left:26px;top:616px;width:892px;height:2px;background:#000"></div>
<div class="a" style="left:26px;top:697px;width:892px;height:2px;background:#000"></div>
<div class="a" style="left:26px;top:718px;width:892px;height:1px;background:#000"></div>
<div class="a" style="left:26px;top:720px;width:892px;height:1px;background:#000"></div>
<div class="a" style="left:154px;top:334px;width:1px;height:387px;background:#000"></div>
<div class="a" style="left:259px;top:334px;width:1px;height:387px;background:#000"></div>
<div class="a" style="left:364px;top:334px;width:1px;height:387px;background:#000"></div>
<div class="a" style="left:449px;top:334px;width:1px;height:387px;background:#000"></div>
<div class="a" style="left:525px;top:334px;width:1px;height:387px;background:#000"></div>
<div class="a" style="left:601px;top:334px;width:1px;height:387px;background:#000"></div>
<div class="a" style="left:677px;top:334px;width:1px;height:387px;background:#000"></div>
<div class="a" style="left:753px;top:334px;width:1px;height:387px;background:#000"></div>
<div class="a" style="left:831px;top:334px;width:1px;height:387px;background:#000"></div>
<div class="a" style="left:917px;top:334px;width:1px;height:387px;background:#000"></div>
<div class="a" style="left:944px;top:334px;width:202px;height:1px;background:#000"></div>
<div class="a" style="left:944px;top:374px;width:202px;height:1px;background:#000"></div>
<div class="a" style="left:944px;top:334px;width:1px;height:365px;background:#000"></div>
<div class="a" style="left:1145px;top:334px;width:1px;height:365px;background:#000"></div>
<div class="a" style="left:944px;top:434px;width:202px;height:1px;background:#000"></div>
<div class="a" style="left:944px;top:455px;width:202px;height:1px;background:#000"></div>
<div class="a" style="left:944px;top:515px;width:202px;height:1px;background:#000"></div>
<div class="a" style="left:944px;top:536px;width:202px;height:1px;background:#000"></div>
<div class="a" style="left:944px;top:596px;width:202px;height:1px;background:#000"></div>
<div class="a" style="left:944px;top:617px;width:202px;height:1px;background:#000"></div>
<div class="a" style="left:944px;top:677px;width:202px;height:1px;background:#000"></div>
<div class="a" style="left:944px;top:698px;width:202px;height:1px;background:#000"></div>
<div class="a" style="left:944px;top:718px;width:202px;height:1px;background:#000"></div>
<div class="a" style="left:944px;top:720px;width:202px;height:1px;background:#000"></div>
<div class="a" style="left:24px;top:222px;width:132px;height:23px;border:2px solid #217346;box-sizing:border-box"></div>
<div class="a" style="left:152px;top:241px;width:6px;height:6px;background:#217346;border:1px solid #f5f5f5;box-sizing:border-box"></div>
<div class="a t c" style="left:28.5px;top:245.00px;font-size:13px;line-height:20px;color:#000;letter-spacing:0.4px;">Kennzahl im</div>
<div class="a t c" style="left:28.5px;top:265.00px;font-size:13px;line-height:20px;color:#000;letter-spacing:0.5px;">amtlichen Vordruck</div>
<div class="a t c" style="left:155px;top:264.70px;font-size:13px;line-height:20px;color:#000;width:101.5px;text-align:right;">81</div>
<div class="a t c" style="left:260px;top:264.70px;font-size:13px;line-height:20px;color:#000;width:101.5px;text-align:right;">86</div>
<div class="a t c" style="left:754px;top:264.70px;font-size:13px;line-height:20px;color:#000;width:74.5px;text-align:right;">66</div>
<div class="a t c" style="left:155px;top:289.50px;font-size:13px;line-height:20px;color:#000;letter-spacing:0.35px;width:209px;text-align:center;">Steuerpfl. Umsätze einschl.</div>
<div class="a t c" style="left:155px;top:309.50px;font-size:13px;line-height:20px;color:#000;letter-spacing:0.55px;width:209px;text-align:center;">unentgeltlicher Wertabgaben</div>
<div class="a t c" style="left:450px;top:299.50px;font-size:13px;line-height:20px;color:#000;letter-spacing:0.37px;width:303px;text-align:center;">Vorsteuer aus</div>
<div class="a t c" style="left:155px;top:345.50px;font-size:13px;line-height:20px;color:#000;width:104px;text-align:center;">19%</div>
<div class="a t c" style="left:260px;top:345.50px;font-size:13px;line-height:20px;color:#000;width:104px;text-align:center;">7%</div>
<div class="a t c" style="left:365px;top:335.50px;font-size:13px;line-height:20px;color:#000;letter-spacing:0.33px;width:84px;text-align:center;">Geschuldete</div>
<div class="a t c" style="left:365px;top:355.50px;font-size:13px;line-height:20px;color:#000;letter-spacing:0.3px;width:84px;text-align:center;">USt.</div>
<div class="a t c" style="left:450px;top:345.50px;font-size:13px;line-height:20px;color:#000;letter-spacing:0.3px;width:75px;text-align:center;">Ausg.</div>
<div class="a t c" style="left:526px;top:335.50px;font-size:13px;line-height:20px;color:#000;letter-spacing:0.3px;width:75px;text-align:center;">Anlagen-</div>
<div class="a t c" style="left:526px;top:355.50px;font-size:13px;line-height:20px;color:#000;letter-spacing:0.3px;width:75px;text-align:center;">Spiegel</div>
<div class="a t c" style="left:602px;top:335.50px;font-size:13px;line-height:20px;color:#000;letter-spacing:0.3px;width:75px;text-align:center;">Bewirt.-</div>
<div class="a t c" style="left:602px;top:355.50px;font-size:13px;line-height:20px;color:#000;letter-spacing:0.3px;width:75px;text-align:center;">Kosten</div>
<div class="a t c" style="left:678px;top:335.50px;font-size:13px;line-height:20px;color:#000;letter-spacing:0.3px;width:75px;text-align:center;">GWG-</div>
<div class="a t c" style="left:678px;top:355.50px;font-size:13px;line-height:20px;color:#000;letter-spacing:0.3px;width:75px;text-align:center;">Sammelp.</div>
<div class="a t c" style="left:754px;top:335.50px;font-size:13px;line-height:20px;color:#000;letter-spacing:0.3px;width:77px;text-align:center;">Abziehbare</div>
<div class="a t c" style="left:754px;top:355.50px;font-size:13px;line-height:20px;color:#000;letter-spacing:0.3px;width:77px;text-align:center;">Vorsteuer</div>
<div class="a t c" style="left:832px;top:335.50px;font-size:13px;line-height:20px;color:#000;letter-spacing:0.3px;width:85px;text-align:center;">zu zahlender</div>
<div class="a t c" style="left:832px;top:355.50px;font-size:13px;line-height:20px;color:#000;letter-spacing:0.3px;width:85px;text-align:center;">Betrag</div>
<div class="a t c" style="left:945px;top:335.50px;font-size:13px;line-height:20px;color:#000;letter-spacing:0.45px;width:200px;text-align:center;">An das Finanzamt übermittelte</div>
<div class="a t c" style="left:945px;top:355.50px;font-size:13px;line-height:20px;color:#000;letter-spacing:0.3px;width:200px;text-align:center;">Betrag (Vorauszahlungssoll)</div>
<div class="a t c" style="left:26px;top:375.70px;font-size:13px;line-height:20px;color:#000;width:125.5px;text-align:right;">1</div>
<div class="a t c" style="left:155px;top:375.70px;font-size:13px;line-height:20px;color:#000;width:97.7px;text-align:right;word-spacing:-0.6px;">4.000,00 €</div>
<div class="a t c" style="left:260px;top:375.70px;font-size:13px;line-height:20px;color:#000;width:80.5px;text-align:right;">-</div>
<div class="a t c" style="left:260px;top:375.70px;font-size:13px;line-height:20px;color:#000;width:97.7px;text-align:right;">€</div>
<div class="a t c" style="left:365px;top:375.70px;font-size:13px;line-height:20px;color:#000;width:77.7px;text-align:right;word-spacing:-0.6px;">760,00 €</div>
<div class="a t c" style="left:450px;top:375.70px;font-size:13px;line-height:20px;color:#000;width:68.7px;text-align:right;word-spacing:-0.6px;">66,50 €</div>
<div class="a t c" style="left:526px;top:375.70px;font-size:13px;line-height:20px;color:#000;width:51.5px;text-align:right;">-</div>
<div class="a t c" style="left:526px;top:375.70px;font-size:13px;line-height:20px;color:#000;width:68.7px;text-align:right;">€</div>
<div class="a t c" style="left:602px;top:375.70px;font-size:13px;line-height:20px;color:#000;width:51.5px;text-align:right;">-</div>
<div class="a t c" style="left:602px;top:375.70px;font-size:13px;line-height:20px;color:#000;width:68.7px;text-align:right;">€</div>
<div class="a t c" style="left:678px;top:375.70px;font-size:13px;line-height:20px;color:#000;width:51.5px;text-align:right;">-</div>
<div class="a t c" style="left:678px;top:375.70px;font-size:13px;line-height:20px;color:#000;width:68.7px;text-align:right;">€</div>
<div class="a t c" style="left:754px;top:375.70px;font-size:13px;line-height:20px;color:#000;width:70.7px;text-align:right;word-spacing:-0.6px;">66,50 €</div>
<div class="a t c" style="left:832px;top:375.70px;font-size:13px;line-height:20px;color:#000;width:78.7px;text-align:right;word-spacing:-0.6px;">693,50 €</div>
<div class="a t c" style="left:26px;top:395.70px;font-size:13px;line-height:20px;color:#000;width:125.5px;text-align:right;">2</div>
<div class="a t c" style="left:155px;top:395.70px;font-size:13px;line-height:20px;color:#000;width:97.7px;text-align:right;word-spacing:-0.6px;">5.000,00 €</div>
<div class="a t c" style="left:260px;top:395.70px;font-size:13px;line-height:20px;color:#000;width:80.5px;text-align:right;">-</div>
<div class="a t c" style="left:260px;top:395.70px;font-size:13px;line-height:20px;color:#000;width:97.7px;text-align:right;">€</div>
<div class="a t c" style="left:365px;top:395.70px;font-size:13px;line-height:20px;color:#000;width:77.7px;text-align:right;word-spacing:-0.6px;">950,00 €</div>
<div class="a t c" style="left:450px;top:395.70px;font-size:13px;line-height:20px;color:#000;width:68.7px;text-align:right;word-spacing:-0.6px;">1.140,00 €</div>
<div class="a t c" style="left:526px;top:395.70px;font-size:13px;line-height:20px;color:#000;width:51.5px;text-align:right;">-</div>
<div class="a t c" style="left:526px;top:395.70px;font-size:13px;line-height:20px;color:#000;width:68.7px;text-align:right;">€</div>
<div class="a t c" style="left:602px;top:395.70px;font-size:13px;line-height:20px;color:#000;width:51.5px;text-align:right;">-</div>
<div class="a t c" style="left:602px;top:395.70px;font-size:13px;line-height:20px;color:#000;width:68.7px;text-align:right;">€</div>
<div class="a t c" style="left:678px;top:395.70px;font-size:13px;line-height:20px;color:#000;width:51.5px;text-align:right;">-</div>
<div class="a t c" style="left:678px;top:395.70px;font-size:13px;line-height:20px;color:#000;width:68.7px;text-align:right;">€</div>
<div class="a t c" style="left:754px;top:395.70px;font-size:13px;line-height:20px;color:#000;width:70.7px;text-align:right;word-spacing:-0.6px;">1.140,00 €</div>
<div class="a t c" style="left:832px;top:395.70px;font-size:13px;line-height:20px;color:#000;width:78.7px;text-align:right;word-spacing:-0.6px;">190,00 €</div>
<div class="a t c" style="left:835px;top:395.70px;font-size:13px;line-height:20px;color:#000;">-</div>
<div class="a t c" style="left:26px;top:415.70px;font-size:13px;line-height:20px;color:#000;width:125.5px;text-align:right;">3</div>
<div class="a t c" style="left:155px;top:415.70px;font-size:13px;line-height:20px;color:#000;width:80.5px;text-align:right;">-</div>
<div class="a t c" style="left:155px;top:415.70px;font-size:13px;line-height:20px;color:#000;width:97.7px;text-align:right;">€</div>
<div class="a t c" style="left:260px;top:415.70px;font-size:13px;line-height:20px;color:#000;width:80.5px;text-align:right;">-</div>
<div class="a t c" style="left:260px;top:415.70px;font-size:13px;line-height:20px;color:#000;width:97.7px;text-align:right;">€</div>
<div class="a t c" style="left:365px;top:415.70px;font-size:13px;line-height:20px;color:#000;width:60.5px;text-align:right;">-</div>
<div class="a t c" style="left:365px;top:415.70px;font-size:13px;line-height:20px;color:#000;width:77.7px;text-align:right;">€</div>
<div class="a t c" style="left:450px;top:415.70px;font-size:13px;line-height:20px;color:#000;width:68.7px;text-align:right;word-spacing:-0.6px;">38,00 €</div>
<div class="a t c" style="left:526px;top:415.70px;font-size:13px;line-height:20px;color:#000;width:51.5px;text-align:right;">-</div>
<div class="a t c" style="left:526px;top:415.70px;font-size:13px;line-height:20px;color:#000;width:68.7px;text-align:right;">€</div>
<div class="a t c" style="left:602px;top:415.70px;font-size:13px;line-height:20px;color:#000;width:51.5px;text-align:right;">-</div>
<div class="a t c" style="left:602px;top:415.70px;font-size:13px;line-height:20px;color:#000;width:68.7px;text-align:right;">€</div>
<div class="a t c" style="left:678px;top:415.70px;font-size:13px;line-height:20px;color:#000;width:51.5px;text-align:right;">-</div>
<div class="a t c" style="left:678px;top:415.70px;font-size:13px;line-height:20px;color:#000;width:68.7px;text-align:right;">€</div>
<div class="a t c" style="left:754px;top:415.70px;font-size:13px;line-height:20px;color:#000;width:70.7px;text-align:right;word-spacing:-0.6px;">38,00 €</div>
<div class="a t c" style="left:832px;top:415.70px;font-size:13px;line-height:20px;color:#000;width:78.7px;text-align:right;word-spacing:-0.6px;">38,00 €</div>
<div class="a t c" style="left:835px;top:415.70px;font-size:13px;line-height:20px;color:#000;">-</div>
<div class="a t c" style="left:28.2px;top:434.90px;font-size:13px;line-height:20px;color:#000;font-weight:700;">1. Quartal</div>
<div class="a t c" style="left:155px;top:434.90px;font-size:13px;line-height:20px;color:#000;font-weight:700;width:97.7px;text-align:right;word-spacing:-0.6px;">9.000,00 €</div>
<div class="a t c" style="left:260px;top:434.90px;font-size:13px;line-height:20px;color:#000;font-weight:700;width:80.5px;text-align:right;">-</div>
<div class="a t c" style="left:260px;top:434.90px;font-size:13px;line-height:20px;color:#000;font-weight:700;width:97.7px;text-align:right;">€</div>
<div class="a t c" style="left:365px;top:434.90px;font-size:13px;line-height:20px;color:#000;font-weight:700;width:77.7px;text-align:right;word-spacing:-0.6px;">1.710,00 €</div>
<div class="a t c" style="left:450px;top:434.90px;font-size:13px;line-height:20px;color:#000;font-weight:700;width:68.7px;text-align:right;word-spacing:-0.6px;">1.244,50 €</div>
<div class="a t c" style="left:526px;top:434.90px;font-size:13px;line-height:20px;color:#000;font-weight:700;width:51.5px;text-align:right;">-</div>
<div class="a t c" style="left:526px;top:434.90px;font-size:13px;line-height:20px;color:#000;font-weight:700;width:68.7px;text-align:right;">€</div>
<div class="a t c" style="left:602px;top:434.90px;font-size:13px;line-height:20px;color:#000;font-weight:700;width:51.5px;text-align:right;">-</div>
<div class="a t c" style="left:602px;top:434.90px;font-size:13px;line-height:20px;color:#000;font-weight:700;width:68.7px;text-align:right;">€</div>
<div class="a t c" style="left:678px;top:434.90px;font-size:13px;line-height:20px;color:#000;font-weight:700;width:51.5px;text-align:right;">-</div>
<div class="a t c" style="left:678px;top:434.90px;font-size:13px;line-height:20px;color:#000;font-weight:700;width:68.7px;text-align:right;">€</div>
<div class="a t c" style="left:754px;top:434.90px;font-size:13px;line-height:20px;color:#000;font-weight:700;width:70.7px;text-align:right;word-spacing:-0.6px;">1.244,50 €</div>
<div class="a t c" style="left:832px;top:434.90px;font-size:13px;line-height:20px;color:#000;font-weight:700;width:78.7px;text-align:right;word-spacing:-0.6px;">465,50 €</div>
<div class="a t c" style="left:26px;top:456.70px;font-size:13px;line-height:20px;color:#000;width:125.5px;text-align:right;">4</div>
<div class="a t c" style="left:155px;top:456.70px;font-size:13px;line-height:20px;color:#000;width:97.7px;text-align:right;word-spacing:-0.6px;">10.000,00 €</div>
<div class="a t c" style="left:260px;top:456.70px;font-size:13px;line-height:20px;color:#000;width:80.5px;text-align:right;">-</div>
<div class="a t c" style="left:260px;top:456.70px;font-size:13px;line-height:20px;color:#000;width:97.7px;text-align:right;">€</div>
<div class="a t c" style="left:365px;top:456.70px;font-size:13px;line-height:20px;color:#000;width:77.7px;text-align:right;word-spacing:-0.6px;">1.900,00 €</div>
<div class="a t c" style="left:450px;top:456.70px;font-size:13px;line-height:20px;color:#000;width:68.7px;text-align:right;word-spacing:-0.6px;">28,50 €</div>
<div class="a t c" style="left:526px;top:456.70px;font-size:13px;line-height:20px;color:#000;width:51.5px;text-align:right;">-</div>
<div class="a t c" style="left:526px;top:456.70px;font-size:13px;line-height:20px;color:#000;width:68.7px;text-align:right;">€</div>
<div class="a t c" style="left:602px;top:456.70px;font-size:13px;line-height:20px;color:#000;width:51.5px;text-align:right;">-</div>
<div class="a t c" style="left:602px;top:456.70px;font-size:13px;line-height:20px;color:#000;width:68.7px;text-align:right;">€</div>
<div class="a t c" style="left:678px;top:456.70px;font-size:13px;line-height:20px;color:#000;width:51.5px;text-align:right;">-</div>
<div class="a t c" style="left:678px;top:456.70px;font-size:13px;line-height:20px;color:#000;width:68.7px;text-align:right;">€</div>
<div class="a t c" style="left:754px;top:456.70px;font-size:13px;line-height:20px;color:#000;width:70.7px;text-align:right;word-spacing:-0.6px;">28,50 €</div>
<div class="a t c" style="left:832px;top:456.70px;font-size:13px;line-height:20px;color:#000;width:78.7px;text-align:right;word-spacing:-0.6px;">1.871,50 €</div>
<div class="a t c" style="left:26px;top:476.70px;font-size:13px;line-height:20px;color:#000;width:125.5px;text-align:right;">5</div>
<div class="a t c" style="left:155px;top:476.70px;font-size:13px;line-height:20px;color:#000;width:97.7px;text-align:right;word-spacing:-0.6px;">7.760,00 €</div>
<div class="a t c" style="left:260px;top:476.70px;font-size:13px;line-height:20px;color:#000;width:80.5px;text-align:right;">-</div>
<div class="a t c" style="left:260px;top:476.70px;font-size:13px;line-height:20px;color:#000;width:97.7px;text-align:right;">€</div>
<div class="a t c" style="left:365px;top:476.70px;font-size:13px;line-height:20px;color:#000;width:77.7px;text-align:right;word-spacing:-0.6px;">1.474,40 €</div>
<div class="a t c" style="left:450px;top:476.70px;font-size:13px;line-height:20px;color:#000;width:51.5px;text-align:right;">-</div>
<div class="a t c" style="left:450px;top:476.70px;font-size:13px;line-height:20px;color:#000;width:68.7px;text-align:right;">€</div>
<div class="a t c" style="left:526px;top:476.70px;font-size:13px;line-height:20px;color:#000;width:51.5px;text-align:right;">-</div>
<div class="a t c" style="left:526px;top:476.70px;font-size:13px;line-height:20px;color:#000;width:68.7px;text-align:right;">€</div>
<div class="a t c" style="left:602px;top:476.70px;font-size:13px;line-height:20px;color:#000;width:51.5px;text-align:right;">-</div>
<div class="a t c" style="left:602px;top:476.70px;font-size:13px;line-height:20px;color:#000;width:68.7px;text-align:right;">€</div>
<div class="a t c" style="left:678px;top:476.70px;font-size:13px;line-height:20px;color:#000;width:51.5px;text-align:right;">-</div>
<div class="a t c" style="left:678px;top:476.70px;font-size:13px;line-height:20px;color:#000;width:68.7px;text-align:right;">€</div>
<div class="a t c" style="left:754px;top:476.70px;font-size:13px;line-height:20px;color:#000;width:53.5px;text-align:right;">-</div>
<div class="a t c" style="left:754px;top:476.70px;font-size:13px;line-height:20px;color:#000;width:70.7px;text-align:right;">€</div>
<div class="a t c" style="left:832px;top:476.70px;font-size:13px;line-height:20px;color:#000;width:78.7px;text-align:right;word-spacing:-0.6px;">1.474,40 €</div>
<div class="a t c" style="left:26px;top:496.70px;font-size:13px;line-height:20px;color:#000;width:125.5px;text-align:right;">6</div>
<div class="a t c" style="left:155px;top:496.70px;font-size:13px;line-height:20px;color:#000;width:80.5px;text-align:right;">-</div>
<div class="a t c" style="left:155px;top:496.70px;font-size:13px;line-height:20px;color:#000;width:97.7px;text-align:right;">€</div>
<div class="a t c" style="left:260px;top:496.70px;font-size:13px;line-height:20px;color:#000;width:80.5px;text-align:right;">-</div>
<div class="a t c" style="left:260px;top:496.70px;font-size:13px;line-height:20px;color:#000;width:97.7px;text-align:right;">€</div>
<div class="a t c" style="left:365px;top:496.70px;font-size:13px;line-height:20px;color:#000;width:60.5px;text-align:right;">-</div>
<div class="a t c" style="left:365px;top:496.70px;font-size:13px;line-height:20px;color:#000;width:77.7px;text-align:right;">€</div>
<div class="a t c" style="left:450px;top:496.70px;font-size:13px;line-height:20px;color:#000;width:51.5px;text-align:right;">-</div>
<div class="a t c" style="left:450px;top:496.70px;font-size:13px;line-height:20px;color:#000;width:68.7px;text-align:right;">€</div>
<div class="a t c" style="left:526px;top:496.70px;font-size:13px;line-height:20px;color:#000;width:51.5px;text-align:right;">-</div>
<div class="a t c" style="left:526px;top:496.70px;font-size:13px;line-height:20px;color:#000;width:68.7px;text-align:right;">€</div>
<div class="a t c" style="left:602px;top:496.70px;font-size:13px;line-height:20px;color:#000;width:51.5px;text-align:right;">-</div>
<div class="a t c" style="left:602px;top:496.70px;font-size:13px;line-height:20px;color:#000;width:68.7px;text-align:right;">€</div>
<div class="a t c" style="left:678px;top:496.70px;font-size:13px;line-height:20px;color:#000;width:51.5px;text-align:right;">-</div>
<div class="a t c" style="left:678px;top:496.70px;font-size:13px;line-height:20px;color:#000;width:68.7px;text-align:right;">€</div>
<div class="a t c" style="left:754px;top:496.70px;font-size:13px;line-height:20px;color:#000;width:53.5px;text-align:right;">-</div>
<div class="a t c" style="left:754px;top:496.70px;font-size:13px;line-height:20px;color:#000;width:70.7px;text-align:right;">€</div>
<div class="a t c" style="left:832px;top:496.70px;font-size:13px;line-height:20px;color:#000;width:61.5px;text-align:right;">-</div>
<div class="a t c" style="left:832px;top:496.70px;font-size:13px;line-height:20px;color:#000;width:78.7px;text-align:right;">€</div>
<div class="a t c" style="left:28.2px;top:515.90px;font-size:13px;line-height:20px;color:#000;font-weight:700;">2. Quartal</div>
<div class="a t c" style="left:155px;top:515.90px;font-size:13px;line-height:20px;color:#000;font-weight:700;width:97.7px;text-align:right;word-spacing:-0.6px;">17.760,00 €</div>
<div class="a t c" style="left:260px;top:515.90px;font-size:13px;line-height:20px;color:#000;font-weight:700;width:80.5px;text-align:right;">-</div>
<div class="a t c" style="left:260px;top:515.90px;font-size:13px;line-height:20px;color:#000;font-weight:700;width:97.7px;text-align:right;">€</div>
<div class="a t c" style="left:365px;top:515.90px;font-size:13px;line-height:20px;color:#000;font-weight:700;width:77.7px;text-align:right;word-spacing:-0.6px;">3.374,40 €</div>
<div class="a t c" style="left:450px;top:515.90px;font-size:13px;line-height:20px;color:#000;font-weight:700;width:68.7px;text-align:right;word-spacing:-0.6px;">28,50 €</div>
<div class="a t c" style="left:526px;top:515.90px;font-size:13px;line-height:20px;color:#000;font-weight:700;width:51.5px;text-align:right;">-</div>
<div class="a t c" style="left:526px;top:515.90px;font-size:13px;line-height:20px;color:#000;font-weight:700;width:68.7px;text-align:right;">€</div>
<div class="a t c" style="left:602px;top:515.90px;font-size:13px;line-height:20px;color:#000;font-weight:700;width:51.5px;text-align:right;">-</div>
<div class="a t c" style="left:602px;top:515.90px;font-size:13px;line-height:20px;color:#000;font-weight:700;width:68.7px;text-align:right;">€</div>
<div class="a t c" style="left:678px;top:515.90px;font-size:13px;line-height:20px;color:#000;font-weight:700;width:51.5px;text-align:right;">-</div>
<div class="a t c" style="left:678px;top:515.90px;font-size:13px;line-height:20px;color:#000;font-weight:700;width:68.7px;text-align:right;">€</div>
<div class="a t c" style="left:754px;top:515.90px;font-size:13px;line-height:20px;color:#000;font-weight:700;width:70.7px;text-align:right;word-spacing:-0.6px;">28,50 €</div>
<div class="a t c" style="left:832px;top:515.90px;font-size:13px;line-height:20px;color:#000;font-weight:700;width:78.7px;text-align:right;word-spacing:-0.6px;">3.345,90 €</div>
<div class="a t c" style="left:26px;top:537.70px;font-size:13px;line-height:20px;color:#000;width:125.5px;text-align:right;">7</div>
<div class="a t c" style="left:155px;top:537.70px;font-size:13px;line-height:20px;color:#000;width:97.7px;text-align:right;word-spacing:-0.6px;">10.000,00 €</div>
<div class="a t c" style="left:260px;top:537.70px;font-size:13px;line-height:20px;color:#000;width:80.5px;text-align:right;">-</div>
<div class="a t c" style="left:260px;top:537.70px;font-size:13px;line-height:20px;color:#000;width:97.7px;text-align:right;">€</div>
<div class="a t c" style="left:365px;top:537.70px;font-size:13px;line-height:20px;color:#000;width:77.7px;text-align:right;word-spacing:-0.6px;">1.900,00 €</div>
<div class="a t c" style="left:450px;top:537.70px;font-size:13px;line-height:20px;color:#000;width:68.7px;text-align:right;word-spacing:-0.6px;">5,70 €</div>
<div class="a t c" style="left:526px;top:537.70px;font-size:13px;line-height:20px;color:#000;width:51.5px;text-align:right;">-</div>
<div class="a t c" style="left:526px;top:537.70px;font-size:13px;line-height:20px;color:#000;width:68.7px;text-align:right;">€</div>
<div class="a t c" style="left:602px;top:537.70px;font-size:13px;line-height:20px;color:#000;width:51.5px;text-align:right;">-</div>
<div class="a t c" style="left:602px;top:537.70px;font-size:13px;line-height:20px;color:#000;width:68.7px;text-align:right;">€</div>
<div class="a t c" style="left:678px;top:537.70px;font-size:13px;line-height:20px;color:#000;width:51.5px;text-align:right;">-</div>
<div class="a t c" style="left:678px;top:537.70px;font-size:13px;line-height:20px;color:#000;width:68.7px;text-align:right;">€</div>
<div class="a t c" style="left:754px;top:537.70px;font-size:13px;line-height:20px;color:#000;width:70.7px;text-align:right;word-spacing:-0.6px;">5,70 €</div>
<div class="a t c" style="left:832px;top:537.70px;font-size:13px;line-height:20px;color:#000;width:78.7px;text-align:right;word-spacing:-0.6px;">1.894,30 €</div>
<div class="a t c" style="left:26px;top:557.70px;font-size:13px;line-height:20px;color:#000;width:125.5px;text-align:right;">8</div>
<div class="a t c" style="left:155px;top:557.70px;font-size:13px;line-height:20px;color:#000;width:80.5px;text-align:right;">-</div>
<div class="a t c" style="left:155px;top:557.70px;font-size:13px;line-height:20px;color:#000;width:97.7px;text-align:right;">€</div>
<div class="a t c" style="left:260px;top:557.70px;font-size:13px;line-height:20px;color:#000;width:80.5px;text-align:right;">-</div>
<div class="a t c" style="left:260px;top:557.70px;font-size:13px;line-height:20px;color:#000;width:97.7px;text-align:right;">€</div>
<div class="a t c" style="left:365px;top:557.70px;font-size:13px;line-height:20px;color:#000;width:60.5px;text-align:right;">-</div>
<div class="a t c" style="left:365px;top:557.70px;font-size:13px;line-height:20px;color:#000;width:77.7px;text-align:right;">€</div>
<div class="a t c" style="left:450px;top:557.70px;font-size:13px;line-height:20px;color:#000;width:68.7px;text-align:right;word-spacing:-0.6px;">76,00 €</div>
<div class="a t c" style="left:526px;top:557.70px;font-size:13px;line-height:20px;color:#000;width:68.7px;text-align:right;word-spacing:-0.6px;">152,00 €</div>
<div class="a t c" style="left:602px;top:557.70px;font-size:13px;line-height:20px;color:#000;width:51.5px;text-align:right;">-</div>
<div class="a t c" style="left:602px;top:557.70px;font-size:13px;line-height:20px;color:#000;width:68.7px;text-align:right;">€</div>
<div class="a t c" style="left:678px;top:557.70px;font-size:13px;line-height:20px;color:#000;width:68.7px;text-align:right;word-spacing:-0.6px;">228,00 €</div>
<div class="a t c" style="left:754px;top:557.70px;font-size:13px;line-height:20px;color:#000;width:70.7px;text-align:right;word-spacing:-0.6px;">456,00 €</div>
<div class="a t c" style="left:832px;top:557.70px;font-size:13px;line-height:20px;color:#000;width:78.7px;text-align:right;word-spacing:-0.6px;">456,00 €</div>
<div class="a t c" style="left:835px;top:557.70px;font-size:13px;line-height:20px;color:#000;">-</div>
<div class="a t c" style="left:26px;top:577.70px;font-size:13px;line-height:20px;color:#000;width:125.5px;text-align:right;">9</div>
<div class="a t c" style="left:155px;top:577.70px;font-size:13px;line-height:20px;color:#000;width:97.7px;text-align:right;word-spacing:-0.6px;">15.000,00 €</div>
<div class="a t c" style="left:260px;top:577.70px;font-size:13px;line-height:20px;color:#000;width:80.5px;text-align:right;">-</div>
<div class="a t c" style="left:260px;top:577.70px;font-size:13px;line-height:20px;color:#000;width:97.7px;text-align:right;">€</div>
<div class="a t c" style="left:365px;top:577.70px;font-size:13px;line-height:20px;color:#000;width:77.7px;text-align:right;word-spacing:-0.6px;">2.850,00 €</div>
<div class="a t c" style="left:450px;top:577.70px;font-size:13px;line-height:20px;color:#000;width:51.5px;text-align:right;">-</div>
<div class="a t c" style="left:450px;top:577.70px;font-size:13px;line-height:20px;color:#000;width:68.7px;text-align:right;">€</div>
<div class="a t c" style="left:526px;top:577.70px;font-size:13px;line-height:20px;color:#000;width:51.5px;text-align:right;">-</div>
<div class="a t c" style="left:526px;top:577.70px;font-size:13px;line-height:20px;color:#000;width:68.7px;text-align:right;">€</div>
<div class="a t c" style="left:602px;top:577.70px;font-size:13px;line-height:20px;color:#000;width:51.5px;text-align:right;">-</div>
<div class="a t c" style="left:602px;top:577.70px;font-size:13px;line-height:20px;color:#000;width:68.7px;text-align:right;">€</div>
<div class="a t c" style="left:678px;top:577.70px;font-size:13px;line-height:20px;color:#000;width:51.5px;text-align:right;">-</div>
<div class="a t c" style="left:678px;top:577.70px;font-size:13px;line-height:20px;color:#000;width:68.7px;text-align:right;">€</div>
<div class="a t c" style="left:754px;top:577.70px;font-size:13px;line-height:20px;color:#000;width:53.5px;text-align:right;">-</div>
<div class="a t c" style="left:754px;top:577.70px;font-size:13px;line-height:20px;color:#000;width:70.7px;text-align:right;">€</div>
<div class="a t c" style="left:832px;top:577.70px;font-size:13px;line-height:20px;color:#000;width:78.7px;text-align:right;word-spacing:-0.6px;">2.850,00 €</div>
<div class="a t c" style="left:28.2px;top:596.90px;font-size:13px;line-height:20px;color:#000;font-weight:700;">3. Quartal</div>
<div class="a t c" style="left:155px;top:596.90px;font-size:13px;line-height:20px;color:#000;font-weight:700;width:97.7px;text-align:right;word-spacing:-0.6px;">25.000,00 €</div>
<div class="a t c" style="left:260px;top:596.90px;font-size:13px;line-height:20px;color:#000;font-weight:700;width:80.5px;text-align:right;">-</div>
<div class="a t c" style="left:260px;top:596.90px;font-size:13px;line-height:20px;color:#000;font-weight:700;width:97.7px;text-align:right;">€</div>
<div class="a t c" style="left:365px;top:596.90px;font-size:13px;line-height:20px;color:#000;font-weight:700;width:77.7px;text-align:right;word-spacing:-0.6px;">4.750,00 €</div>
<div class="a t c" style="left:450px;top:596.90px;font-size:13px;line-height:20px;color:#000;font-weight:700;width:68.7px;text-align:right;word-spacing:-0.6px;">81,70 €</div>
<div class="a t c" style="left:526px;top:596.90px;font-size:13px;line-height:20px;color:#000;font-weight:700;width:68.7px;text-align:right;word-spacing:-0.6px;">152,00 €</div>
<div class="a t c" style="left:602px;top:596.90px;font-size:13px;line-height:20px;color:#000;font-weight:700;width:51.5px;text-align:right;">-</div>
<div class="a t c" style="left:602px;top:596.90px;font-size:13px;line-height:20px;color:#000;font-weight:700;width:68.7px;text-align:right;">€</div>
<div class="a t c" style="left:678px;top:596.90px;font-size:13px;line-height:20px;color:#000;font-weight:700;width:68.7px;text-align:right;word-spacing:-0.6px;">228,00 €</div>
<div class="a t c" style="left:754px;top:596.90px;font-size:13px;line-height:20px;color:#000;font-weight:700;width:70.7px;text-align:right;word-spacing:-0.6px;">461,70 €</div>
<div class="a t c" style="left:832px;top:596.90px;font-size:13px;line-height:20px;color:#000;font-weight:700;width:78.7px;text-align:right;word-spacing:-0.6px;">4.288,30 €</div>
<div class="a t c" style="left:26px;top:618.70px;font-size:13px;line-height:20px;color:#000;width:125.5px;text-align:right;">10</div>
<div class="a t c" style="left:155px;top:618.70px;font-size:13px;line-height:20px;color:#000;width:80.5px;text-align:right;">-</div>
<div class="a t c" style="left:155px;top:618.70px;font-size:13px;line-height:20px;color:#000;width:97.7px;text-align:right;">€</div>
<div class="a t c" style="left:260px;top:618.70px;font-size:13px;line-height:20px;color:#000;width:80.5px;text-align:right;">-</div>
<div class="a t c" style="left:260px;top:618.70px;font-size:13px;line-height:20px;color:#000;width:97.7px;text-align:right;">€</div>
<div class="a t c" style="left:365px;top:618.70px;font-size:13px;line-height:20px;color:#000;width:60.5px;text-align:right;">-</div>
<div class="a t c" style="left:365px;top:618.70px;font-size:13px;line-height:20px;color:#000;width:77.7px;text-align:right;">€</div>
<div class="a t c" style="left:450px;top:618.70px;font-size:13px;line-height:20px;color:#000;width:68.7px;text-align:right;word-spacing:-0.6px;">76,00 €</div>
<div class="a t c" style="left:526px;top:618.70px;font-size:13px;line-height:20px;color:#000;width:51.5px;text-align:right;">-</div>
<div class="a t c" style="left:526px;top:618.70px;font-size:13px;line-height:20px;color:#000;width:68.7px;text-align:right;">€</div>
<div class="a t c" style="left:602px;top:618.70px;font-size:13px;line-height:20px;color:#000;width:68.7px;text-align:right;word-spacing:-0.6px;">9,50 €</div>
<div class="a t c" style="left:678px;top:618.70px;font-size:13px;line-height:20px;color:#000;width:51.5px;text-align:right;">-</div>
<div class="a t c" style="left:678px;top:618.70px;font-size:13px;line-height:20px;color:#000;width:68.7px;text-align:right;">€</div>
<div class="a t c" style="left:754px;top:618.70px;font-size:13px;line-height:20px;color:#000;width:70.7px;text-align:right;word-spacing:-0.6px;">85,50 €</div>
<div class="a t c" style="left:832px;top:618.70px;font-size:13px;line-height:20px;color:#000;width:78.7px;text-align:right;word-spacing:-0.6px;">85,50 €</div>
<div class="a t c" style="left:835px;top:618.70px;font-size:13px;line-height:20px;color:#000;">-</div>
<div class="a t c" style="left:26px;top:638.70px;font-size:13px;line-height:20px;color:#000;width:125.5px;text-align:right;">11</div>
<div class="a t c" style="left:155px;top:638.70px;font-size:13px;line-height:20px;color:#000;width:97.7px;text-align:right;word-spacing:-0.6px;">100,00 €</div>
<div class="a t c" style="left:260px;top:638.70px;font-size:13px;line-height:20px;color:#000;width:80.5px;text-align:right;">-</div>
<div class="a t c" style="left:260px;top:638.70px;font-size:13px;line-height:20px;color:#000;width:97.7px;text-align:right;">€</div>
<div class="a t c" style="left:365px;top:638.70px;font-size:13px;line-height:20px;color:#000;width:77.7px;text-align:right;word-spacing:-0.6px;">19,00 €</div>
<div class="a t c" style="left:450px;top:638.70px;font-size:13px;line-height:20px;color:#000;width:68.7px;text-align:right;word-spacing:-0.6px;">95,00 €</div>
<div class="a t c" style="left:526px;top:638.70px;font-size:13px;line-height:20px;color:#000;width:68.7px;text-align:right;word-spacing:-0.6px;">4.789,92 €</div>
<div class="a t c" style="left:602px;top:638.70px;font-size:13px;line-height:20px;color:#000;width:51.5px;text-align:right;">-</div>
<div class="a t c" style="left:602px;top:638.70px;font-size:13px;line-height:20px;color:#000;width:68.7px;text-align:right;">€</div>
<div class="a t c" style="left:678px;top:638.70px;font-size:13px;line-height:20px;color:#000;width:51.5px;text-align:right;">-</div>
<div class="a t c" style="left:678px;top:638.70px;font-size:13px;line-height:20px;color:#000;width:68.7px;text-align:right;">€</div>
<div class="a t c" style="left:754px;top:638.70px;font-size:13px;line-height:20px;color:#000;width:70.7px;text-align:right;word-spacing:-0.6px;">4.884,92 €</div>
<div class="a t c" style="left:832px;top:638.70px;font-size:13px;line-height:20px;color:#000;width:78.7px;text-align:right;word-spacing:-0.6px;">4.865,92 €</div>
<div class="a t c" style="left:835px;top:638.70px;font-size:13px;line-height:20px;color:#000;">-</div>
<div class="a t c" style="left:26px;top:658.70px;font-size:13px;line-height:20px;color:#000;width:125.5px;text-align:right;">12</div>
<div class="a t c" style="left:155px;top:658.70px;font-size:13px;line-height:20px;color:#000;width:80.5px;text-align:right;">-</div>
<div class="a t c" style="left:155px;top:658.70px;font-size:13px;line-height:20px;color:#000;width:97.7px;text-align:right;">€</div>
<div class="a t c" style="left:260px;top:658.70px;font-size:13px;line-height:20px;color:#000;width:80.5px;text-align:right;">-</div>
<div class="a t c" style="left:260px;top:658.70px;font-size:13px;line-height:20px;color:#000;width:97.7px;text-align:right;">€</div>
<div class="a t c" style="left:365px;top:658.70px;font-size:13px;line-height:20px;color:#000;width:60.5px;text-align:right;">-</div>
<div class="a t c" style="left:365px;top:658.70px;font-size:13px;line-height:20px;color:#000;width:77.7px;text-align:right;">€</div>
<div class="a t c" style="left:450px;top:658.70px;font-size:13px;line-height:20px;color:#000;width:68.7px;text-align:right;word-spacing:-0.6px;">237,50 €</div>
<div class="a t c" style="left:526px;top:658.70px;font-size:13px;line-height:20px;color:#000;width:51.5px;text-align:right;">-</div>
<div class="a t c" style="left:526px;top:658.70px;font-size:13px;line-height:20px;color:#000;width:68.7px;text-align:right;">€</div>
<div class="a t c" style="left:602px;top:658.70px;font-size:13px;line-height:20px;color:#000;width:51.5px;text-align:right;">-</div>
<div class="a t c" style="left:602px;top:658.70px;font-size:13px;line-height:20px;color:#000;width:68.7px;text-align:right;">€</div>
<div class="a t c" style="left:678px;top:658.70px;font-size:13px;line-height:20px;color:#000;width:51.5px;text-align:right;">-</div>
<div class="a t c" style="left:678px;top:658.70px;font-size:13px;line-height:20px;color:#000;width:68.7px;text-align:right;">€</div>
<div class="a t c" style="left:754px;top:658.70px;font-size:13px;line-height:20px;color:#000;width:70.7px;text-align:right;word-spacing:-0.6px;">237,50 €</div>
<div class="a t c" style="left:832px;top:658.70px;font-size:13px;line-height:20px;color:#000;width:78.7px;text-align:right;word-spacing:-0.6px;">237,50 €</div>
<div class="a t c" style="left:835px;top:658.70px;font-size:13px;line-height:20px;color:#000;">-</div>
<div class="a t c" style="left:28.2px;top:677.90px;font-size:13px;line-height:20px;color:#000;font-weight:700;">4. Quartal</div>
<div class="a t c" style="left:155px;top:677.90px;font-size:13px;line-height:20px;color:#000;font-weight:700;width:97.7px;text-align:right;word-spacing:-0.6px;">100,00 €</div>
<div class="a t c" style="left:260px;top:677.90px;font-size:13px;line-height:20px;color:#000;font-weight:700;width:80.5px;text-align:right;">-</div>
<div class="a t c" style="left:260px;top:677.90px;font-size:13px;line-height:20px;color:#000;font-weight:700;width:97.7px;text-align:right;">€</div>
<div class="a t c" style="left:365px;top:677.90px;font-size:13px;line-height:20px;color:#000;font-weight:700;width:77.7px;text-align:right;word-spacing:-0.6px;">19,00 €</div>
<div class="a t c" style="left:450px;top:677.90px;font-size:13px;line-height:20px;color:#000;font-weight:700;width:68.7px;text-align:right;word-spacing:-0.6px;">408,50 €</div>
<div class="a t c" style="left:526px;top:677.90px;font-size:13px;line-height:20px;color:#000;font-weight:700;width:68.7px;text-align:right;word-spacing:-0.6px;">4.789,92 €</div>
<div class="a t c" style="left:602px;top:677.90px;font-size:13px;line-height:20px;color:#000;font-weight:700;width:68.7px;text-align:right;word-spacing:-0.6px;">9,50 €</div>
<div class="a t c" style="left:678px;top:677.90px;font-size:13px;line-height:20px;color:#000;font-weight:700;width:51.5px;text-align:right;">-</div>
<div class="a t c" style="left:678px;top:677.90px;font-size:13px;line-height:20px;color:#000;font-weight:700;width:68.7px;text-align:right;">€</div>
<div class="a t c" style="left:754px;top:677.90px;font-size:13px;line-height:20px;color:#000;font-weight:700;width:70.7px;text-align:right;word-spacing:-0.6px;">5.207,92 €</div>
<div class="a t c" style="left:832px;top:677.90px;font-size:13px;line-height:20px;color:#000;font-weight:700;width:78.7px;text-align:right;word-spacing:-0.6px;">5.188,92 €</div>
<div class="a t c" style="left:835px;top:677.90px;font-size:13px;line-height:20px;color:#000;font-weight:700;">-</div>
<div class="a t c" style="left:28.2px;top:698.80px;font-size:13px;line-height:20px;color:#000;font-weight:700;">Jahr</div>
<div class="a t c" style="left:155px;top:698.80px;font-size:13px;line-height:20px;color:#000;font-weight:700;width:97.7px;text-align:right;word-spacing:-0.6px;">51.860,00 €</div>
<div class="a t c" style="left:260px;top:698.80px;font-size:13px;line-height:20px;color:#000;font-weight:700;width:80.5px;text-align:right;">-</div>
<div class="a t c" style="left:260px;top:698.80px;font-size:13px;line-height:20px;color:#000;font-weight:700;width:97.7px;text-align:right;">€</div>
<div class="a t c" style="left:365px;top:698.80px;font-size:13px;line-height:20px;color:#000;font-weight:700;width:77.7px;text-align:right;word-spacing:-0.6px;">9.853,40 €</div>
<div class="a t c" style="left:450px;top:698.80px;font-size:13px;line-height:20px;color:#000;font-weight:700;width:68.7px;text-align:right;word-spacing:-0.6px;">1.763,20 €</div>
<div class="a t c" style="left:526px;top:698.80px;font-size:13px;line-height:20px;color:#000;font-weight:700;width:68.7px;text-align:right;word-spacing:-0.6px;">4.941,92 €</div>
<div class="a t c" style="left:602px;top:698.80px;font-size:13px;line-height:20px;color:#000;font-weight:700;width:68.7px;text-align:right;word-spacing:-0.6px;">9,50 €</div>
<div class="a t c" style="left:678px;top:698.80px;font-size:13px;line-height:20px;color:#000;font-weight:700;width:68.7px;text-align:right;word-spacing:-0.6px;">228,00 €</div>
<div class="a t c" style="left:754px;top:698.80px;font-size:13px;line-height:20px;color:#000;font-weight:700;width:70.7px;text-align:right;word-spacing:-0.6px;">6.942,62 €</div>
<div class="a t c" style="left:832px;top:698.80px;font-size:13px;line-height:20px;color:#000;font-weight:700;width:78.7px;text-align:right;word-spacing:-0.6px;">2.910,78 €</div>
<div class="a t c" style="left:945px;top:434.90px;font-size:13px;line-height:20px;color:#000;font-weight:700;width:193.7px;text-align:right;word-spacing:-0.6px;">465,50 €</div>
<div class="a t c" style="left:945px;top:515.90px;font-size:13px;line-height:20px;color:#000;font-weight:700;width:193.7px;text-align:right;word-spacing:-0.6px;">3.391,50 €</div>
<div class="a t c" style="left:945px;top:596.90px;font-size:13px;line-height:20px;color:#000;font-weight:700;width:193.7px;text-align:right;word-spacing:-0.6px;">4.288,30 €</div>
<div class="a t c" style="left:945px;top:677.90px;font-size:13px;line-height:20px;color:#000;font-weight:700;width:193.7px;text-align:right;word-spacing:-0.6px;">5.188,92 €</div>
<div class="a t c" style="left:948px;top:677.90px;font-size:13px;line-height:20px;color:#000;font-weight:700;">-</div>
<div class="a t c" style="left:945px;top:698.80px;font-size:13px;line-height:20px;color:#000;font-weight:700;width:193.7px;text-align:right;word-spacing:-0.6px;">2.956,38 €</div>
<div class="a" style="left:1266px;top:204px;width:18px;height:567px;background:#e6e6e6"></div>
<div class="a" style="left:1268px;top:206px;width:15px;height:15px;background:#f7f7f7;border:1px solid #c6c6c6;box-sizing:border-box"></div>
<svg class="a" style="left:1271px;top:211px;" width="9" height="5" viewBox="0 0 9 5"><path d="M0 5h9L4.5 0z" fill="#777"/></svg>
<div class="a" style="left:1268px;top:221px;width:15px;height:513px;background:#f7f7f7;border:1px solid #ababab;box-sizing:border-box"></div>
<div class="a" style="left:1268px;top:734px;width:15px;height:23px;background:#d6d6d6"></div>
<div class="a" style="left:1268px;top:757px;width:15px;height:14px;background:#f7f7f7;border:1px solid #c6c6c6;box-sizing:border-box"></div>
<svg class="a" style="left:1271px;top:762px;" width="9" height="5" viewBox="0 0 9 5"><path d="M0 0h9L4.5 5z" fill="#777"/></svg>
<div class="a" style="left:1px;top:771px;width:1283px;height:29px;background:#e6e6e6"></div>
<div class="a" style="left:1px;top:771px;width:1283px;height:1px;background:#c6c6c6"></div>
<svg class="a" style="left:27px;top:781px;" width="5" height="7" viewBox="0 0 5 7"><path d="M5 0v7L0 3.5z" fill="#217346"/></svg>
<svg class="a" style="left:55px;top:781px;" width="5" height="7" viewBox="0 0 5 7"><path d="M0 0v7l5-3.5z" fill="#b5b5b5"/></svg>
<div class="a" style="left:81px;top:787px;width:2px;height:2px;background:#217346"></div>
<div class="a" style="left:85px;top:787px;width:2px;height:2px;background:#217346"></div>
<div class="a" style="left:89px;top:787px;width:2px;height:2px;background:#217346"></div>
<div class="a" style="left:100px;top:776px;width:1px;height:18px;background:#a6a6a6"></div>
<div class="a" style="left:103px;top:774px;width:69px;height:21px;background:#f2f200"></div>
<div class="a t " style="left:102.79140625px;top:774.67px;font-size:12.5px;line-height:20px;color:#000;letter-spacing:-0.417px;width:69px;text-align:center;">ESt.Zahl</div>
<div class="a" style="left:174px;top:776px;width:1px;height:18px;background:#a6a6a6"></div>
<div class="a" style="left:177px;top:774px;width:122px;height:21px;background:#f2f200"></div>
<div class="a t " style="left:176.92345588235295px;top:774.67px;font-size:12.5px;line-height:20px;color:#000;letter-spacing:-0.153px;width:122px;text-align:center;">Sonst.Leist.Entn.</div>
<div class="a" style="left:301px;top:776px;width:1px;height:18px;background:#a6a6a6"></div>
<div class="a" style="left:304px;top:774px;width:96px;height:21px;background:#f2f200"></div>
<div class="a t " style="left:304.13267045454546px;top:774.67px;font-size:12.5px;line-height:20px;color:#000;letter-spacing:0.265px;width:96px;text-align:center;">Kfz-Nutzung</div>
<div class="a" style="left:403px;top:776px;width:1px;height:18px;background:#a6a6a6"></div>
<div class="a" style="left:405px;top:774px;width:110px;height:21px;background:#f2f200"></div>
<div class="a t " style="left:405.1472596153846px;top:774.67px;font-size:12.5px;line-height:20px;color:#000;letter-spacing:0.295px;width:110px;text-align:center;">Arbeitszimmer</div>
<div class="a" style="left:517px;top:776px;width:1px;height:18px;background:#a6a6a6"></div>
<div class="a" style="left:519px;top:774px;width:67px;height:21px;background:#0070c0"></div>
<div class="a t " style="left:519.1792857142857px;top:774.67px;font-size:12.5px;line-height:20px;color:#fff;letter-spacing:0.359px;width:67px;text-align:center;">pr.Ausg</div>
<div class="a" style="left:588px;top:771px;width:99px;height:25px;background:linear-gradient(#f7f7f7,#e2efd8);border-left:1px solid #ababab;border-right:1px solid #ababab;box-sizing:border-box"></div>
<div class="a" style="left:588px;top:794px;width:99px;height:2px;background:#217346"></div>
<div class="a t " style="left:588px;top:774.50px;font-size:13px;line-height:20px;color:#217346;font-weight:700;width:99px;text-align:center;">USt.Voranm</div>
<div class="a" style="left:689px;top:774px;width:79px;height:21px;background:#92d050"></div>
<div class="a t " style="left:688.9373125px;top:774.67px;font-size:12.5px;line-height:20px;color:#000;letter-spacing:-0.125px;width:79px;text-align:center;">USt.Erklär</div>
<div class="a" style="left:770px;top:776px;width:1px;height:18px;background:#a6a6a6"></div>
<div class="a" style="left:773px;top:774px;width:49px;height:21px;background:#92d050"></div>
<div class="a t " style="left:772.715px;top:774.67px;font-size:12.5px;line-height:20px;color:#000;letter-spacing:-0.57px;width:49px;text-align:center;">BWA</div>
<div class="a" style="left:824px;top:776px;width:1px;height:18px;background:#a6a6a6"></div>
<div class="a" style="left:827px;top:774px;width:42px;height:21px;background:#92d050"></div>
<div class="a t " style="left:826.65125px;top:774.67px;font-size:12.5px;line-height:20px;color:#000;letter-spacing:-0.698px;width:42px;text-align:center;">EÜR</div>
<div class="a" style="left:871px;top:776px;width:1px;height:18px;background:#a6a6a6"></div>
<svg class="a" style="left:904px;top:776px;" width="18" height="18" viewBox="0 0 18 18"><circle cx="9" cy="9" r="8" fill="none" stroke="#777" stroke-width="1.3"/><path d="M9 4.5v9M4.5 9h9" stroke="#777" stroke-width="1.6"/></svg>
<div class="a" style="left:982px;top:780px;width:2px;height:2px;background:#aaa"></div>
<div class="a" style="left:982px;top:784px;width:2px;height:2px;background:#aaa"></div>
<div class="a" style="left:982px;top:788px;width:2px;height:2px;background:#aaa"></div>
<div class="a" style="left:999px;top:778px;width:15px;height:14px;background:#f7f7f7;border:1px solid #c6c6c6;box-sizing:border-box"></div>
<svg class="a" style="left:1004px;top:781px;" width="5" height="8" viewBox="0 0 5 8"><path d="M5 0v8L0 4z" fill="#777"/></svg>
<div class="a" style="left:1014px;top:778px;width:217px;height:14px;background:#f7f7f7;border:1px solid #ababab;box-sizing:border-box"></div>
<div class="a" style="left:1231px;top:778px;width:20px;height:14px;background:#d6d6d6"></div>
<div class="a" style="left:1252px;top:778px;width:15px;height:14px;background:#f7f7f7;border:1px solid #c6c6c6;box-sizing:border-box"></div>
<svg class="a" style="left:1258px;top:781px;" width="5" height="8" viewBox="0 0 5 8"><path d="M0 0v8l5-4z" fill="#777"/></svg>
<div class="a" style="left:1px;top:800px;width:1283px;height:19px;background:#f3f3f3"></div>
<div class="a" style="left:1px;top:799px;width:1283px;height:1px;background:#d6d6d6"></div>
<div class="a t " style="left:7px;top:800.08px;font-size:11.3px;line-height:20px;color:#444;">Bereit</div>
<div class="a" style="left:986px;top:800px;width:38px;height:19px;background:#d5d5d5"></div>
<svg class="a" style="left:998px;top:803px;" width="14" height="13" viewBox="0 0 14 13"><path d="M0.5 0.5h13v12h-13z M0.5 4.5h13M0.5 8.5h13M4.5 0.5v12M9.5 0.5v12" fill="none" stroke="#777" stroke-width="1"/></svg>
<svg class="a" style="left:1036px;top:802px;" width="14" height="14" viewBox="0 0 14 14"><rect x="0.5" y="0.5" width="13" height="13" fill="none" stroke="#666"/><rect x="2.5" y="2.5" width="9" height="9" fill="none" stroke="#666"/><path d="M4 5h6M4 7h6M4 9h6" stroke="#666" stroke-width="1"/></svg>
<svg class="a" style="left:1074px;top:802px;" width="14" height="14" viewBox="0 0 14 14"><path d="M0.5 13.5V0.5h13v13z" fill="none" stroke="#666"/><path d="M0.5 8.5h13M5.5 0.5v8M8.5 0.5v5" stroke="#666"/></svg>
<div class="a" style="left:1105px;top:809px;width:6px;height:2px;background:#555"></div>
<div class="a" style="left:1115px;top:809px;width:100px;height:1px;background:#999"></div>
<div class="a" style="left:1163px;top:804px;width:4px;height:10px;background:#555"></div>
<svg class="a" style="left:1219px;top:805px;" width="8" height="8" viewBox="0 0 8 8"><path d="M4 0v8M0 4h8" stroke="#555" stroke-width="1.8"/></svg>
<div class="a t " style="left:1237px;top:800.22px;font-size:10.9px;line-height:20px;color:#444;">100 %</div>
<div class="a" style="left:0px;top:65px;width:1px;height:755px;background:#cfcfcf"></div>
<div class="a" style="left:1284px;top:65px;width:1px;height:755px;background:#cfcfcf"></div>
<div class="a" style="left:0px;top:819px;width:1285px;height:1px;background:#c6c6c6"></div>
</body></html>
